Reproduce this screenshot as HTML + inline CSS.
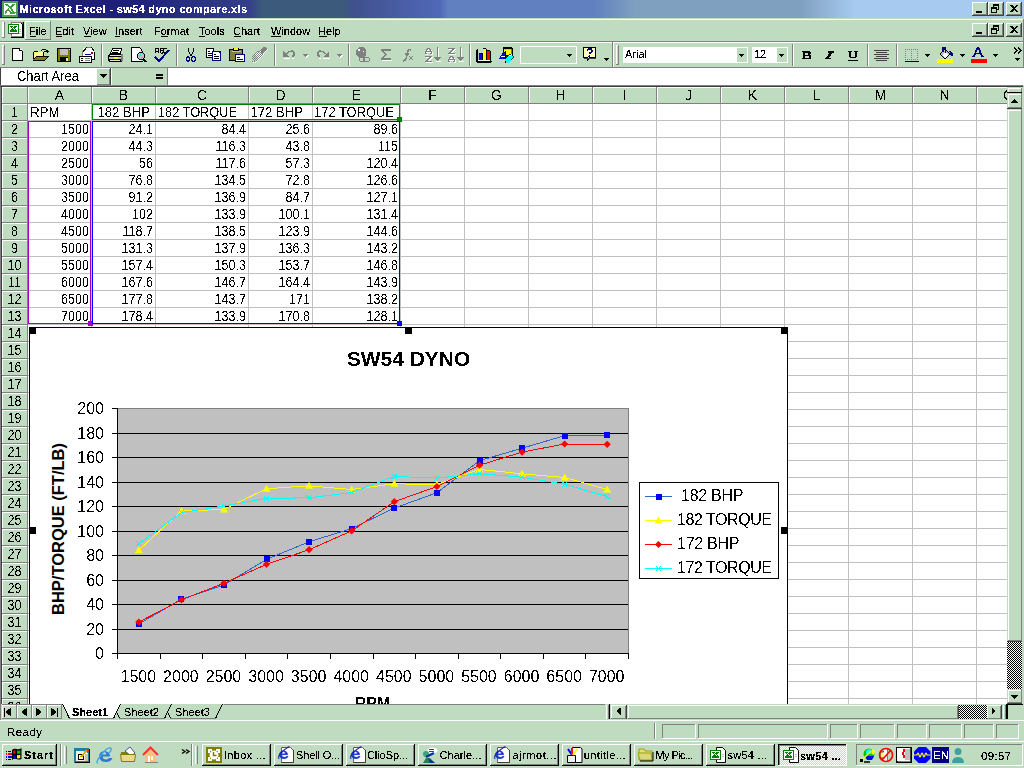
<!DOCTYPE html><html><head><meta charset="utf-8"><title>Microsoft Excel - sw54 dyno compare.xls</title><style>
*{margin:0;padding:0}html,body{width:1024px;height:768px;overflow:hidden;background:#c0dcc0}svg{display:block;font-family:"Liberation Sans",sans-serif}
</style></head><body>
<svg width="1024" height="768" viewBox="0 0 1024 768">
<defs>
<linearGradient id="tg" gradientUnits="userSpaceOnUse" x1="0" x2="1024" y1="0" y2="0"><stop offset="0.0000" stop-color="#1e1e7a"/><stop offset="0.1270" stop-color="#1e2078"/><stop offset="0.2441" stop-color="#34408a"/><stop offset="0.2559" stop-color="#3c5a7c"/><stop offset="0.3369" stop-color="#3c5a7c"/><stop offset="0.3438" stop-color="#40508c"/><stop offset="0.4297" stop-color="#5068b8"/><stop offset="0.4375" stop-color="#6080c0"/><stop offset="0.5801" stop-color="#6080c0"/><stop offset="0.6211" stop-color="#80a0c0"/><stop offset="0.7812" stop-color="#80a0c0"/><stop offset="0.8350" stop-color="#a6caf0"/><stop offset="1.0000" stop-color="#a6caf0"/></linearGradient>
<pattern id="dith" width="2" height="2" patternUnits="userSpaceOnUse"><rect width="2" height="2" fill="#fff"/><rect width="1" height="1" fill="#000"/><rect x="1" y="1" width="1" height="1" fill="#000"/></pattern>
<clipPath id="chartclip"><rect x="0" y="0" width="1007" height="704"/></clipPath><clipPath id="colclip"><rect x="977" y="87" width="30" height="17"/></clipPath><pattern id="dithw" width="2" height="2" patternUnits="userSpaceOnUse"><rect width="2" height="2" fill="#c0dcc0"/><rect width="1" height="1" fill="#fff"/><rect x="1" y="1" width="1" height="1" fill="#fff"/></pattern>
<filter id="crisp" x="-5%" y="-20%" width="110%" height="140%"><feComponentTransfer><feFuncA type="discrete" tableValues="0 1"/></feComponentTransfer></filter><filter id="crisp2" x="-5%" y="-20%" width="110%" height="140%"><feComponentTransfer><feFuncA type="discrete" tableValues="0 0 1 1 1"/></feComponentTransfer></filter>
</defs>
<g shape-rendering="crispEdges">
<rect x="0" y="0" width="1024" height="768" fill="#c0dcc0" />
<rect x="0" y="0" width="1024" height="18" fill="url(#tg)" />
</g>
<g shape-rendering="crispEdges">
<rect x="2" y="1" width="16" height="16" fill="#50a050" />
<rect x="4" y="3" width="12" height="12" fill="#fff" />
<path d="M5 4h3l2 2.5 2-2.5h3l-3.5 4 3.5 4.5v1h-5l-0-1-2-2.5-2 3.5h-1v-2l3-3.5z" fill="#40a040"/>
<path d="M7.5 6.5l5 6" stroke="#fff" stroke-width="1"/>
<rect x="12" y="12" width="4" height="1" fill="#40a040" />
<rect x="972" y="2" width="16" height="14" fill="#c0dcc0" />
<rect x="972" y="15" width="16" height="1" fill="#404040" />
<rect x="987" y="2" width="1" height="14" fill="#404040" />
<rect x="972" y="2" width="15" height="1" fill="#ffffff" />
<rect x="972" y="2" width="1" height="13" fill="#ffffff" />
<rect x="973" y="14" width="14" height="1" fill="#808080" />
<rect x="986" y="3" width="1" height="12" fill="#808080" />
<rect x="976" y="11" width="6" height="2" fill="#000" />
<rect x="988" y="2" width="16" height="14" fill="#c0dcc0" />
<rect x="988" y="15" width="16" height="1" fill="#404040" />
<rect x="1003" y="2" width="1" height="14" fill="#404040" />
<rect x="988" y="2" width="15" height="1" fill="#ffffff" />
<rect x="988" y="2" width="1" height="13" fill="#ffffff" />
<rect x="989" y="14" width="14" height="1" fill="#808080" />
<rect x="1002" y="3" width="1" height="12" fill="#808080" />
<path d="M993 4h6v6h-2v-1h1v-3h-4v1h-1z" fill="#000"/>
<path d="M991 7h6v6h-6z M992 9v3h4v-3z" fill="#000" fill-rule="evenodd"/>
<rect x="1006" y="2" width="16" height="14" fill="#c0dcc0" />
<rect x="1006" y="15" width="16" height="1" fill="#404040" />
<rect x="1021" y="2" width="1" height="14" fill="#404040" />
<rect x="1006" y="2" width="15" height="1" fill="#ffffff" />
<rect x="1006" y="2" width="1" height="13" fill="#ffffff" />
<rect x="1007" y="14" width="14" height="1" fill="#808080" />
<rect x="1020" y="3" width="1" height="12" fill="#808080" />
<path d="M1010 5h2l2 2 2-2h2l-3 3.5 3 3.5h-2l-2-2-2 2h-2l3-3.5z" fill="#000"/>
</g>
<text x="19.5" y="13" font-size="11" text-anchor="start" font-weight="bold" fill="#fff"  textLength="227.5" lengthAdjust="spacing" filter="url(#crisp2)">Microsoft Excel - sw54 dyno compare.xls</text>
<g shape-rendering="crispEdges">
<rect x="0" y="19" width="1023" height="1" fill="#ffffff" />
<rect x="0" y="41" width="1023" height="1" fill="#808080" />
<rect x="1023" y="19" width="1" height="23" fill="#808080" />
<rect x="2" y="22" width="1" height="16" fill="#ffffff" />
<rect x="3" y="22" width="1" height="16" fill="#ffffff" />
<rect x="4" y="22" width="1" height="16" fill="#808080" />
<rect x="2" y="37" width="3" height="1" fill="#808080" />
<rect x="11" y="22" width="13" height="16" fill="#000" />
<rect x="11" y="22" width="12" height="15" fill="#808080" />
<rect x="12" y="23" width="10" height="13" fill="#fff" />
<rect x="22" y="24" width="1" height="13" fill="#000" />
<rect x="12" y="37" width="12" height="1" fill="#000" />
<rect x="21" y="23" width="1" height="1" fill="#000" />
<rect x="20" y="24" width="1" height="1" fill="#fff" />
<rect x="19" y="29" width="2" height="1" fill="#c0c0c0" />
<rect x="19" y="31" width="2" height="1" fill="#c0c0c0" />
<rect x="19" y="33" width="2" height="1" fill="#c0c0c0" />
<rect x="8" y="24" width="11" height="10" fill="#fff" />
<rect x="8" y="24" width="11" height="1" fill="#008000" />
<rect x="8" y="25" width="1" height="1" fill="#008000" />
<rect x="18" y="25" width="1" height="1" fill="#008000" />
<rect x="8" y="26" width="1" height="1" fill="#008000" />
<rect x="10" y="26" width="3" height="1" fill="#008000" />
<rect x="14" y="26" width="3" height="1" fill="#008000" />
<rect x="18" y="26" width="1" height="1" fill="#008000" />
<rect x="8" y="27" width="1" height="1" fill="#008000" />
<rect x="11" y="27" width="1" height="1" fill="#008000" />
<rect x="13" y="27" width="3" height="1" fill="#008000" />
<rect x="18" y="27" width="1" height="1" fill="#008000" />
<rect x="8" y="28" width="1" height="1" fill="#008000" />
<rect x="12" y="28" width="1" height="1" fill="#008000" />
<rect x="14" y="28" width="1" height="1" fill="#008000" />
<rect x="18" y="28" width="1" height="1" fill="#008000" />
<rect x="8" y="29" width="1" height="1" fill="#008000" />
<rect x="11" y="29" width="3" height="1" fill="#008000" />
<rect x="15" y="29" width="1" height="1" fill="#008000" />
<rect x="18" y="29" width="1" height="1" fill="#008000" />
<rect x="8" y="30" width="1" height="1" fill="#008000" />
<rect x="10" y="30" width="7" height="1" fill="#008000" />
<rect x="18" y="30" width="1" height="1" fill="#008000" />
<rect x="8" y="31" width="1" height="1" fill="#008000" />
<rect x="10" y="31" width="7" height="1" fill="#008000" />
<rect x="18" y="31" width="1" height="1" fill="#008000" />
<rect x="8" y="32" width="1" height="1" fill="#008000" />
<rect x="18" y="32" width="1" height="1" fill="#008000" />
<rect x="8" y="33" width="11" height="1" fill="#008000" />
<rect x="25" y="21" width="26" height="1" fill="#ffffff" />
<rect x="25" y="21" width="1" height="19" fill="#ffffff" />
<rect x="25" y="39" width="26" height="1" fill="#808080" />
<rect x="50" y="21" width="1" height="19" fill="#808080" />
<rect x="972" y="23" width="16" height="14" fill="#c0dcc0" />
<rect x="972" y="36" width="16" height="1" fill="#404040" />
<rect x="987" y="23" width="1" height="14" fill="#404040" />
<rect x="972" y="23" width="15" height="1" fill="#ffffff" />
<rect x="972" y="23" width="1" height="13" fill="#ffffff" />
<rect x="973" y="35" width="14" height="1" fill="#808080" />
<rect x="986" y="24" width="1" height="12" fill="#808080" />
<rect x="976" y="32" width="6" height="2" fill="#000" />
<rect x="988" y="23" width="16" height="14" fill="#c0dcc0" />
<rect x="988" y="36" width="16" height="1" fill="#404040" />
<rect x="1003" y="23" width="1" height="14" fill="#404040" />
<rect x="988" y="23" width="15" height="1" fill="#ffffff" />
<rect x="988" y="23" width="1" height="13" fill="#ffffff" />
<rect x="989" y="35" width="14" height="1" fill="#808080" />
<rect x="1002" y="24" width="1" height="12" fill="#808080" />
<path d="M993 25h6v6h-2v-1h1v-3h-4v1h-1z" fill="#000"/>
<path d="M991 28h6v6h-6z M992 30v3h4v-3z" fill="#000" fill-rule="evenodd"/>
<rect x="1006" y="23" width="16" height="14" fill="#c0dcc0" />
<rect x="1006" y="36" width="16" height="1" fill="#404040" />
<rect x="1021" y="23" width="1" height="14" fill="#404040" />
<rect x="1006" y="23" width="15" height="1" fill="#ffffff" />
<rect x="1006" y="23" width="1" height="13" fill="#ffffff" />
<rect x="1007" y="35" width="14" height="1" fill="#808080" />
<rect x="1020" y="24" width="1" height="12" fill="#808080" />
<path d="M1010 26h2l2 2 2-2h2l-3 3.5 3 3.5h-2l-2-2-2 2h-2l3-3.5z" fill="#000"/>
</g>
<text x="29" y="35" font-size="11" text-anchor="start" font-weight="normal" fill="#000"  filter="url(#crisp2)">File</text>
<text x="55" y="35" font-size="11" text-anchor="start" font-weight="normal" fill="#000"  filter="url(#crisp2)">Edit</text>
<text x="83" y="35" font-size="11" text-anchor="start" font-weight="normal" fill="#000"  filter="url(#crisp2)">View</text>
<text x="115" y="35" font-size="11" text-anchor="start" font-weight="normal" fill="#000"  filter="url(#crisp2)">Insert</text>
<text x="154" y="35" font-size="11" text-anchor="start" font-weight="normal" fill="#000"  filter="url(#crisp2)">Format</text>
<text x="199" y="35" font-size="11" text-anchor="start" font-weight="normal" fill="#000"  filter="url(#crisp2)">Tools</text>
<text x="233" y="35" font-size="11" text-anchor="start" font-weight="normal" fill="#000"  filter="url(#crisp2)">Chart</text>
<text x="271" y="35" font-size="11" text-anchor="start" font-weight="normal" fill="#000"  filter="url(#crisp2)">Window</text>
<text x="318" y="35" font-size="11" text-anchor="start" font-weight="normal" fill="#000"  filter="url(#crisp2)">Help</text>
<g shape-rendering="crispEdges">
<rect x="30" y="36" width="6" height="1" fill="#000" />
<rect x="56" y="36" width="6" height="1" fill="#000" />
<rect x="84" y="36" width="7" height="1" fill="#000" />
<rect x="115" y="36" width="5" height="1" fill="#000" />
<rect x="161" y="36" width="7" height="1" fill="#000" />
<rect x="199" y="36" width="6" height="1" fill="#000" />
<rect x="234" y="36" width="7" height="1" fill="#000" />
<rect x="271" y="36" width="10" height="1" fill="#000" />
<rect x="319" y="36" width="8" height="1" fill="#000" />
</g>
<g shape-rendering="crispEdges">
<rect x="0" y="42" width="1023" height="1" fill="#ffffff" />
<rect x="0" y="67" width="1024" height="1" fill="#808080" />
<rect x="1023" y="42" width="1" height="26" fill="#808080" />
<rect x="612" y="42" width="1" height="26" fill="#808080" />
<rect x="613" y="43" width="1" height="24" fill="#ffffff" />
<rect x="2" y="45" width="1" height="20" fill="#ffffff" />
<rect x="2" y="45" width="3" height="1" fill="#ffffff" />
<rect x="4" y="45" width="1" height="20" fill="#808080" />
<rect x="2" y="64" width="3" height="1" fill="#808080" />
<rect x="101" y="44" width="1" height="22" fill="#808080" />
<rect x="102" y="44" width="1" height="22" fill="#ffffff" />
<rect x="176" y="44" width="1" height="22" fill="#808080" />
<rect x="177" y="44" width="1" height="22" fill="#ffffff" />
<rect x="274" y="44" width="1" height="22" fill="#808080" />
<rect x="275" y="44" width="1" height="22" fill="#ffffff" />
<rect x="348" y="44" width="1" height="22" fill="#808080" />
<rect x="349" y="44" width="1" height="22" fill="#ffffff" />
<rect x="469" y="44" width="1" height="22" fill="#808080" />
<rect x="470" y="44" width="1" height="22" fill="#ffffff" />
<rect x="616" y="45" width="1" height="20" fill="#ffffff" />
<rect x="616" y="45" width="3" height="1" fill="#ffffff" />
<rect x="618" y="45" width="1" height="20" fill="#808080" />
<rect x="616" y="64" width="3" height="1" fill="#808080" />
<rect x="792" y="44" width="1" height="22" fill="#808080" />
<rect x="793" y="44" width="1" height="22" fill="#ffffff" />
<rect x="867" y="44" width="1" height="22" fill="#808080" />
<rect x="868" y="44" width="1" height="22" fill="#ffffff" />
<rect x="896" y="44" width="1" height="22" fill="#808080" />
<rect x="897" y="44" width="1" height="22" fill="#ffffff" />
<rect x="13" y="49" width="9" height="11" fill="#fff" />
<rect x="12" y="48" width="8" height="1" fill="#000" />
<rect x="12" y="48" width="1" height="13" fill="#000" />
<rect x="12" y="60" width="11" height="1" fill="#000" />
<rect x="22" y="51" width="1" height="10" fill="#000" />
<rect x="20" y="49" width="1" height="1" fill="#000" />
<rect x="21" y="50" width="1" height="1" fill="#000" />
<rect x="19" y="49" width="1" height="2" fill="#000" />
<rect x="19" y="50" width="3" height="1" fill="#000" />
<rect x="20" y="49" width="1" height="1" fill="#fff" />
<rect x="34" y="51" width="4" height="1" fill="#000" />
<rect x="33" y="52" width="1" height="9" fill="#000" />
<rect x="37" y="52" width="7" height="1" fill="#000" />
<rect x="43" y="52" width="1" height="4" fill="#000" />
<rect x="34" y="52" width="9" height="4" fill="#ffff80" />
<rect x="34" y="56" width="2" height="3" fill="#ffff80" />
<path d="M36 56h13l-4 4h-12z" fill="#808000"/>
<rect x="36" y="56" width="13" height="1" fill="#000" />
<rect x="33" y="60" width="12" height="1" fill="#000" />
<path d="M48.5 56.5l-4 4" stroke="#000"/>
<path d="M36.5 56.5l-3 3" stroke="#000"/>
<rect x="42" y="49" width="4" height="1" fill="#000" />
<rect x="41" y="50" width="1" height="1" fill="#000" />
<rect x="46" y="50" width="1" height="1" fill="#000" />
<rect x="44" y="51" width="5" height="1" fill="#000" />
<rect x="47" y="52" width="1" height="1" fill="#000" />
<rect x="47" y="50" width="1" height="2" fill="#000" />
<rect x="57" y="48" width="14" height="14" fill="#000" />
<rect x="58" y="49" width="12" height="12" fill="#808000" />
<rect x="60" y="49" width="8" height="6" fill="#c0c0c0" />
<rect x="60" y="57" width="8" height="5" fill="#000" />
<rect x="66" y="58" width="2" height="3" fill="#e0e0e0" />
<rect x="69" y="49" width="1" height="1" fill="#fff" />
<rect x="83" y="48" width="11" height="11" fill="#fff" />
<rect x="86" y="47" width="6" height="1" fill="#808080" />
<path d="M82.5 52.5l4-5M91.5 47.5l3 4" stroke="#000"/>
<rect x="94" y="52" width="1" height="8" fill="#000" />
<rect x="87" y="59" width="8" height="1" fill="#000" />
<rect x="82" y="51" width="1" height="6" fill="#808080" />
<rect x="85" y="54" width="6" height="1" fill="#0000a0" />
<rect x="91" y="52" width="2" height="2" fill="#a00000" />
<rect x="79" y="56" width="13" height="7" fill="#000" />
<rect x="80" y="57" width="11" height="5" fill="#fff" />
<rect x="81" y="58" width="2" height="1" fill="#000" />
<rect x="81" y="60" width="2" height="1" fill="#000" />
<rect x="85" y="58" width="5" height="1" fill="#808080" />
<rect x="85" y="60" width="5" height="1" fill="#808080" />
<path d="M112.5 48.5h9l-1 5h-10z" fill="#fff" stroke="#000"/>
<rect x="113" y="50" width="6" height="1" fill="#000" />
<rect x="112" y="52" width="6" height="1" fill="#000" />
<rect x="109" y="54" width="13" height="8" fill="#000" />
<rect x="108" y="55" width="15" height="6" fill="#000" />
<rect x="110" y="55" width="11" height="1" fill="#e0e0e0" />
<rect x="109" y="57" width="12" height="1" fill="#c0c0c0" />
<rect x="109" y="58" width="12" height="1" fill="#c0c0c0" />
<rect x="114" y="57" width="4" height="1" fill="#ffff00" />
<rect x="114" y="58" width="4" height="1" fill="#ffff00" />
<rect x="110" y="60" width="10" height="1" fill="#e0e0e0" />
<rect x="121" y="54" width="2" height="7" fill="#808080" />
<rect x="132" y="48" width="9" height="13" fill="#fff" />
<rect x="131" y="47" width="9" height="1" fill="#000" />
<rect x="131" y="47" width="1" height="15" fill="#000" />
<rect x="131" y="61" width="12" height="1" fill="#000" />
<rect x="142" y="51" width="1" height="3" fill="#000" />
<rect x="140" y="48" width="1" height="1" fill="#000" />
<rect x="141" y="49" width="1" height="2" fill="#000" />
<rect x="139" y="49" width="1" height="1" fill="#fff" />
<circle cx="141" cy="56" r="3.6" fill="#c0c0c0" stroke="#000" stroke-width="1.2"/>
<rect x="139" y="54" width="2" height="2" fill="#00ffff" />
<rect x="141" y="57" width="2" height="1" fill="#00ffff" />
<path d="M143.5 59.5l3 2.5" stroke="#000" stroke-width="2"/>
<path d="M155.5 53v-4l1-1h1l1 1v4M155.5 51h3M160.5 53v-5h2l1 1v1l-1 .5 1 .5v1l-1 1h-2M160.5 50.5h2M167 49l-1-1h-1.5l-1 1v3l1 1h1.5l1-1" fill="none" stroke="#000"/>
<path d="M155 57l4 4 10-11" fill="none" stroke="#000080" stroke-width="2"/>
<path d="M188.5 48v3l2 4M193.5 48v3l-2 4" fill="none" stroke="#000"/>
<rect x="190" y="54" width="2" height="2" fill="#000" />
<ellipse cx="188" cy="59" rx="1.8" ry="2.2" fill="none" stroke="#000080" stroke-width="1.2"/><ellipse cx="193.5" cy="59" rx="1.8" ry="2.2" fill="none" stroke="#000080" stroke-width="1.2"/>
<rect x="206" y="48" width="8" height="10" fill="#000" />
<rect x="207" y="49" width="6" height="8" fill="#fff" />
<rect x="208" y="51" width="2" height="1" fill="#000" />
<rect x="208" y="53" width="4" height="1" fill="#000" />
<rect x="208" y="55" width="4" height="1" fill="#000" />
<rect x="212" y="51" width="9" height="10" fill="#000080" />
<rect x="213" y="52" width="7" height="8" fill="#fff" />
<rect x="214" y="54" width="2" height="1" fill="#000" />
<rect x="214" y="56" width="5" height="1" fill="#000" />
<rect x="214" y="58" width="5" height="1" fill="#000" />
<rect x="219" y="52" width="1" height="1" fill="#000080" />
<rect x="229" y="49" width="14" height="12" fill="#000" />
<rect x="230" y="50" width="12" height="10" fill="#808040" />
<rect x="233" y="48" width="6" height="3" fill="#000" />
<rect x="234" y="48" width="4" height="2" fill="#ffff00" />
<rect x="232" y="51" width="9" height="1" fill="#c0c0c0" />
<rect x="235" y="54" width="10" height="8" fill="#000080" />
<rect x="236" y="55" width="8" height="6" fill="#fff" />
<rect x="237" y="57" width="3" height="1" fill="#000080" />
<rect x="237" y="59" width="6" height="1" fill="#000080" />
<rect x="263" y="47" width="3" height="1" fill="#808080" />
<rect x="262" y="48" width="5" height="1" fill="#808080" />
<rect x="261" y="49" width="6" height="1" fill="#808080" />
<rect x="260" y="50" width="6" height="1" fill="#808080" />
<rect x="257" y="51" width="3" height="1" fill="#808080" />
<rect x="261" y="51" width="4" height="1" fill="#808080" />
<rect x="256" y="52" width="1" height="1" fill="#808080" />
<rect x="258" y="52" width="1" height="1" fill="#808080" />
<rect x="260" y="52" width="4" height="1" fill="#808080" />
<rect x="255" y="53" width="1" height="1" fill="#808080" />
<rect x="257" y="53" width="1" height="1" fill="#808080" />
<rect x="259" y="53" width="1" height="1" fill="#808080" />
<rect x="261" y="53" width="2" height="1" fill="#808080" />
<rect x="254" y="54" width="1" height="1" fill="#808080" />
<rect x="256" y="54" width="1" height="1" fill="#808080" />
<rect x="258" y="54" width="1" height="1" fill="#808080" />
<rect x="260" y="54" width="1" height="1" fill="#808080" />
<rect x="262" y="54" width="1" height="1" fill="#808080" />
<rect x="253" y="55" width="1" height="1" fill="#808080" />
<rect x="255" y="55" width="1" height="1" fill="#808080" />
<rect x="257" y="55" width="1" height="1" fill="#808080" />
<rect x="259" y="55" width="1" height="1" fill="#808080" />
<rect x="261" y="55" width="1" height="1" fill="#808080" />
<rect x="252" y="56" width="1" height="1" fill="#808080" />
<rect x="254" y="56" width="1" height="1" fill="#808080" />
<rect x="256" y="56" width="1" height="1" fill="#808080" />
<rect x="258" y="56" width="1" height="1" fill="#808080" />
<rect x="260" y="56" width="1" height="1" fill="#808080" />
<rect x="253" y="57" width="1" height="1" fill="#808080" />
<rect x="255" y="57" width="1" height="1" fill="#808080" />
<rect x="257" y="57" width="1" height="1" fill="#808080" />
<rect x="259" y="57" width="1" height="1" fill="#808080" />
<rect x="252" y="58" width="1" height="1" fill="#808080" />
<rect x="254" y="58" width="1" height="1" fill="#808080" />
<rect x="256" y="58" width="1" height="1" fill="#808080" />
<rect x="258" y="58" width="1" height="1" fill="#808080" />
<rect x="253" y="59" width="1" height="1" fill="#808080" />
<rect x="255" y="59" width="1" height="1" fill="#808080" />
<rect x="257" y="59" width="1" height="1" fill="#808080" />
<rect x="254" y="60" width="1" height="1" fill="#808080" />
<rect x="256" y="60" width="1" height="1" fill="#808080" />
<rect x="252" y="61" width="1" height="1" fill="#808080" />
<rect x="254" y="61" width="1" height="1" fill="#808080" />
<rect x="267" y="49" width="1" height="1" fill="#ffffff" />
<rect x="266" y="50" width="1" height="1" fill="#ffffff" />
<rect x="260" y="51" width="1" height="1" fill="#ffffff" />
<rect x="265" y="51" width="1" height="1" fill="#ffffff" />
<rect x="257" y="52" width="1" height="1" fill="#ffffff" />
<rect x="259" y="52" width="1" height="1" fill="#ffffff" />
<rect x="264" y="52" width="1" height="1" fill="#ffffff" />
<rect x="256" y="53" width="1" height="1" fill="#ffffff" />
<rect x="258" y="53" width="1" height="1" fill="#ffffff" />
<rect x="260" y="53" width="1" height="1" fill="#ffffff" />
<rect x="263" y="53" width="1" height="1" fill="#ffffff" />
<rect x="255" y="54" width="1" height="1" fill="#ffffff" />
<rect x="257" y="54" width="1" height="1" fill="#ffffff" />
<rect x="259" y="54" width="1" height="1" fill="#ffffff" />
<rect x="261" y="54" width="1" height="1" fill="#ffffff" />
<rect x="263" y="54" width="1" height="1" fill="#ffffff" />
<rect x="256" y="55" width="1" height="1" fill="#ffffff" />
<rect x="258" y="55" width="1" height="1" fill="#ffffff" />
<rect x="260" y="55" width="1" height="1" fill="#ffffff" />
<rect x="262" y="55" width="1" height="1" fill="#ffffff" />
<rect x="257" y="56" width="1" height="1" fill="#ffffff" />
<rect x="259" y="56" width="1" height="1" fill="#ffffff" />
<rect x="261" y="56" width="1" height="1" fill="#ffffff" />
<rect x="258" y="57" width="1" height="1" fill="#ffffff" />
<rect x="260" y="57" width="1" height="1" fill="#ffffff" />
<rect x="259" y="58" width="1" height="1" fill="#ffffff" />
<rect x="258" y="59" width="1" height="1" fill="#ffffff" />
<rect x="257" y="60" width="1" height="1" fill="#ffffff" />
<rect x="256" y="61" width="1" height="1" fill="#ffffff" />
<rect x="253" y="62" width="1" height="1" fill="#ffffff" />
<rect x="255" y="62" width="1" height="1" fill="#ffffff" />
<path d="M283 51v6h6z" fill="#808080"/>
<path d="M286 54q3-3 6-3q3 1 2 4l-2 2" fill="none" stroke="#808080" stroke-width="1.5"/>
<rect x="284" y="58" width="6" height="1" fill="#ffffff" />
<rect x="292" y="58" width="2" height="1" fill="#ffffff" />
<rect x="304" y="55" width="5" height="1" fill="#ffffff" />
<rect x="305" y="56" width="3" height="1" fill="#ffffff" />
<rect x="306" y="57" width="1" height="1" fill="#ffffff" />
<rect x="303" y="54" width="5" height="1" fill="#808080" />
<rect x="304" y="55" width="3" height="1" fill="#808080" />
<rect x="305" y="56" width="1" height="1" fill="#808080" />
<path d="M329 51v6h-6z" fill="#808080"/>
<path d="M326 54q-3-3-6-3q-3 1-2 4l2 2" fill="none" stroke="#808080" stroke-width="1.5"/>
<rect x="323" y="58" width="7" height="1" fill="#ffffff" />
<rect x="319" y="58" width="2" height="1" fill="#ffffff" />
<rect x="338" y="55" width="5" height="1" fill="#ffffff" />
<rect x="339" y="56" width="3" height="1" fill="#ffffff" />
<rect x="340" y="57" width="1" height="1" fill="#ffffff" />
<rect x="337" y="54" width="5" height="1" fill="#808080" />
<rect x="338" y="55" width="3" height="1" fill="#808080" />
<rect x="339" y="56" width="1" height="1" fill="#808080" />
<path d="M356 50l3-3h4l3 3v5l-3 3h-4l-3-3z" fill="#808080"/>
<rect x="358" y="49" width="2" height="2" fill="#ffffff" />
<rect x="363" y="51" width="1" height="1" fill="#ffffff" />
<rect x="359.5" y="57.5" width="5" height="4" rx="2" fill="none" stroke="#808080"/><rect x="363.5" y="57.5" width="6" height="4" rx="2" fill="none" stroke="#808080"/>
<path d="M390 51v-1h-8l4 4.5-4 4.5h8v-1" fill="none" stroke="#808080" stroke-width="1.5"/>
<rect x="382" y="60" width="10" height="1" fill="#ffffff" />
<path d="M403 61q3 0 4-6l1-4q1-2 3-1M405 54h4" fill="none" stroke="#808080" stroke-width="1.5"/>
<path d="M409 56l4 4M413 56l-4 4" stroke="#808080" stroke-width="1.2"/>
<rect x="428" y="49" width="3" height="1" fill="#ffffff" />
<rect x="427" y="50" width="2" height="1" fill="#ffffff" />
<rect x="430" y="50" width="2" height="1" fill="#ffffff" />
<rect x="427" y="51" width="1" height="1" fill="#ffffff" />
<rect x="431" y="51" width="1" height="1" fill="#ffffff" />
<rect x="426" y="52" width="7" height="1" fill="#ffffff" />
<rect x="426" y="53" width="1" height="1" fill="#ffffff" />
<rect x="432" y="53" width="1" height="1" fill="#ffffff" />
<rect x="426" y="54" width="2" height="1" fill="#ffffff" />
<rect x="431" y="54" width="2" height="1" fill="#ffffff" />
<rect x="427" y="48" width="3" height="1" fill="#808080" />
<rect x="426" y="49" width="2" height="1" fill="#808080" />
<rect x="429" y="49" width="2" height="1" fill="#808080" />
<rect x="426" y="50" width="1" height="1" fill="#808080" />
<rect x="430" y="50" width="1" height="1" fill="#808080" />
<rect x="425" y="51" width="7" height="1" fill="#808080" />
<rect x="425" y="52" width="1" height="1" fill="#808080" />
<rect x="431" y="52" width="1" height="1" fill="#808080" />
<rect x="425" y="53" width="2" height="1" fill="#808080" />
<rect x="430" y="53" width="2" height="1" fill="#808080" />
<rect x="426" y="57" width="7" height="1" fill="#ffffff" />
<rect x="430" y="58" width="2" height="1" fill="#ffffff" />
<rect x="429" y="59" width="2" height="1" fill="#ffffff" />
<rect x="428" y="60" width="2" height="1" fill="#ffffff" />
<rect x="427" y="61" width="2" height="1" fill="#ffffff" />
<rect x="426" y="62" width="7" height="1" fill="#ffffff" />
<rect x="425" y="56" width="7" height="1" fill="#808080" />
<rect x="429" y="57" width="2" height="1" fill="#808080" />
<rect x="428" y="58" width="2" height="1" fill="#808080" />
<rect x="427" y="59" width="2" height="1" fill="#808080" />
<rect x="426" y="60" width="2" height="1" fill="#808080" />
<rect x="425" y="61" width="7" height="1" fill="#808080" />
<rect x="438" y="48" width="1" height="11" fill="#ffffff" />
<rect x="437" y="47" width="1" height="12" fill="#808080" />
<rect x="434" y="57" width="7" height="1" fill="#808080" />
<rect x="435" y="58" width="5" height="1" fill="#808080" />
<rect x="436" y="59" width="3" height="1" fill="#808080" />
<rect x="437" y="60" width="1" height="1" fill="#808080" />
<rect x="436" y="61" width="5" height="1" fill="#ffffff" />
<rect x="449" y="49" width="7" height="1" fill="#ffffff" />
<rect x="453" y="50" width="2" height="1" fill="#ffffff" />
<rect x="452" y="51" width="2" height="1" fill="#ffffff" />
<rect x="451" y="52" width="2" height="1" fill="#ffffff" />
<rect x="450" y="53" width="2" height="1" fill="#ffffff" />
<rect x="449" y="54" width="7" height="1" fill="#ffffff" />
<rect x="448" y="48" width="7" height="1" fill="#808080" />
<rect x="452" y="49" width="2" height="1" fill="#808080" />
<rect x="451" y="50" width="2" height="1" fill="#808080" />
<rect x="450" y="51" width="2" height="1" fill="#808080" />
<rect x="449" y="52" width="2" height="1" fill="#808080" />
<rect x="448" y="53" width="7" height="1" fill="#808080" />
<rect x="451" y="57" width="3" height="1" fill="#ffffff" />
<rect x="450" y="58" width="2" height="1" fill="#ffffff" />
<rect x="453" y="58" width="2" height="1" fill="#ffffff" />
<rect x="450" y="59" width="1" height="1" fill="#ffffff" />
<rect x="454" y="59" width="1" height="1" fill="#ffffff" />
<rect x="449" y="60" width="7" height="1" fill="#ffffff" />
<rect x="449" y="61" width="1" height="1" fill="#ffffff" />
<rect x="455" y="61" width="1" height="1" fill="#ffffff" />
<rect x="449" y="62" width="2" height="1" fill="#ffffff" />
<rect x="454" y="62" width="2" height="1" fill="#ffffff" />
<rect x="450" y="56" width="3" height="1" fill="#808080" />
<rect x="449" y="57" width="2" height="1" fill="#808080" />
<rect x="452" y="57" width="2" height="1" fill="#808080" />
<rect x="449" y="58" width="1" height="1" fill="#808080" />
<rect x="453" y="58" width="1" height="1" fill="#808080" />
<rect x="448" y="59" width="7" height="1" fill="#808080" />
<rect x="448" y="60" width="1" height="1" fill="#808080" />
<rect x="454" y="60" width="1" height="1" fill="#808080" />
<rect x="448" y="61" width="2" height="1" fill="#808080" />
<rect x="453" y="61" width="2" height="1" fill="#808080" />
<rect x="461" y="48" width="1" height="11" fill="#ffffff" />
<rect x="460" y="47" width="1" height="12" fill="#808080" />
<rect x="457" y="57" width="7" height="1" fill="#808080" />
<rect x="458" y="58" width="5" height="1" fill="#808080" />
<rect x="459" y="59" width="3" height="1" fill="#808080" />
<rect x="460" y="60" width="1" height="1" fill="#808080" />
<rect x="459" y="61" width="5" height="1" fill="#ffffff" />
<rect x="477" y="49" width="1" height="13" fill="#000" />
<rect x="477" y="61" width="15" height="1" fill="#000" />
<rect x="476" y="50" width="2" height="12" fill="#000" />
<rect x="477" y="62" width="14" height="1" fill="#000" />
<rect x="478" y="52" width="1" height="8" fill="#c0c0c0" />
<rect x="478" y="60" width="13" height="1" fill="#fff" />
<rect x="479" y="54" width="3" height="6" fill="#0000ff" />
<rect x="479" y="53" width="3" height="1" fill="#000" />
<rect x="482" y="53" width="1" height="7" fill="#000" />
<rect x="483" y="49" width="3" height="11" fill="#ffff00" />
<rect x="483" y="48" width="3" height="1" fill="#000" />
<rect x="486" y="49" width="1" height="11" fill="#000" />
<rect x="487" y="51" width="3" height="9" fill="#ff0000" />
<rect x="487" y="50" width="3" height="1" fill="#000" />
<rect x="490" y="51" width="1" height="10" fill="#000" />
<rect x="503" y="48" width="10" height="8" fill="#000" />
<rect x="504" y="49" width="8" height="6" fill="#ffff00" />
<rect x="504" y="49" width="8" height="1" fill="#c0c0c0" />
<rect x="511" y="49" width="1" height="6" fill="#808000" />
<rect x="503" y="47" width="9" height="1" fill="#000" />
<path d="M499.5 58.5l4-6h2v6" fill="#0000ff" stroke="#000080"/>
<rect x="501" y="56" width="4" height="1" fill="#fff" />
<rect x="505" y="51" width="1" height="12" fill="#000" />
<path d="M506 57l5-3 3 3-5 4z" fill="#00ffff" stroke="#000" stroke-width=".8"/>
<circle cx="508" cy="60" r="2.6" fill="#00ffff"/>
<path d="M509 56l3-1.5" stroke="#fff" stroke-width="1.2"/>
<rect x="520" y="46" width="57" height="1" fill="#ffffff" />
<rect x="520" y="63" width="57" height="1" fill="#ffffff" />
<rect x="520" y="46" width="1" height="18" fill="#ffffff" />
<rect x="576" y="46" width="1" height="18" fill="#ffffff" />
<rect x="567" y="54" width="5" height="1" fill="#000" />
<rect x="568" y="55" width="3" height="1" fill="#000" />
<rect x="569" y="56" width="1" height="1" fill="#000" />
<path d="M583.5 47.5h12v10h-6l-2 3v-3h-4z" fill="#ffffc0" stroke="#000"/>
<rect x="584" y="58" width="12" height="1" fill="#404040" />
<text x="586" y="57" font-size="12" text-anchor="start" font-weight="bold" fill="#000080"  filter="url(#crisp2)">?</text>
<rect x="604" y="58" width="5" height="1" fill="#000" />
<rect x="605" y="59" width="3" height="1" fill="#000" />
<rect x="606" y="60" width="1" height="1" fill="#000" />
<rect x="623" y="47" width="125" height="16" fill="#fff" />
<rect x="737" y="48" width="10" height="14" fill="#c0dcc0" />
<rect x="739" y="54" width="5" height="1" fill="#000" />
<rect x="740" y="55" width="3" height="1" fill="#000" />
<rect x="741" y="56" width="1" height="1" fill="#000" />
<text x="625" y="58" font-size="11" text-anchor="start" font-weight="normal" fill="#000"  filter="url(#crisp2)">Arial</text>
<rect x="752" y="47" width="36" height="16" fill="#fff" />
<rect x="777" y="48" width="10" height="14" fill="#c0dcc0" />
<rect x="779" y="54" width="5" height="1" fill="#000" />
<rect x="780" y="55" width="3" height="1" fill="#000" />
<rect x="781" y="56" width="1" height="1" fill="#000" />
<text x="754" y="58" font-size="11" text-anchor="start" font-weight="normal" fill="#000"  filter="url(#crisp2)">12</text>
<path d="M802 51h6q3 0 3 2t-2 1.5q2.5.5 2.5 2.5t-3 2h-6.5v-1h1v-6h-1z M805 52.5v2h2.5q1 0 1-1t-1-1z M805 55.5v2.5h3q1 0 1-1.2t-1-1.3z" fill="#000" fill-rule="evenodd"/>
<path d="M828 51h6v1.5h-1.5l-3 5h1.5v1.5h-6v-1.5h1.5l3-5h-1.5z" fill="#000"/>
<path d="M848 51h4v1h-1v4q0 1.5 2 1.5t2-1.5v-4h-1v-1h4v1h-1v4q0 2.5-4 2.5t-4-2.5v-4h-1z" fill="#000"/>
<rect x="848" y="60" width="10" height="1" fill="#000" />
<rect x="874" y="50" width="15" height="1" fill="#404040" />
<rect x="876" y="52" width="11" height="1" fill="#404040" />
<rect x="874" y="54" width="15" height="1" fill="#404040" />
<rect x="876" y="56" width="11" height="1" fill="#404040" />
<rect x="874" y="58" width="15" height="1" fill="#404040" />
<rect x="876" y="60" width="11" height="1" fill="#404040" />
<rect x="905" y="49" width="1" height="1" fill="#808080" />
<rect x="907" y="49" width="1" height="1" fill="#808080" />
<rect x="909" y="49" width="1" height="1" fill="#808080" />
<rect x="911" y="49" width="1" height="1" fill="#808080" />
<rect x="913" y="49" width="1" height="1" fill="#808080" />
<rect x="915" y="49" width="1" height="1" fill="#808080" />
<rect x="917" y="49" width="1" height="1" fill="#808080" />
<rect x="905" y="51" width="1" height="1" fill="#808080" />
<rect x="911" y="51" width="1" height="1" fill="#808080" />
<rect x="917" y="51" width="1" height="1" fill="#808080" />
<rect x="905" y="53" width="1" height="1" fill="#808080" />
<rect x="911" y="53" width="1" height="1" fill="#808080" />
<rect x="917" y="53" width="1" height="1" fill="#808080" />
<rect x="905" y="55" width="1" height="1" fill="#808080" />
<rect x="911" y="55" width="1" height="1" fill="#808080" />
<rect x="917" y="55" width="1" height="1" fill="#808080" />
<rect x="905" y="57" width="1" height="1" fill="#808080" />
<rect x="911" y="57" width="1" height="1" fill="#808080" />
<rect x="917" y="57" width="1" height="1" fill="#808080" />
<rect x="905" y="59" width="1" height="1" fill="#808080" />
<rect x="907" y="59" width="1" height="1" fill="#808080" />
<rect x="909" y="59" width="1" height="1" fill="#808080" />
<rect x="911" y="59" width="1" height="1" fill="#808080" />
<rect x="913" y="59" width="1" height="1" fill="#808080" />
<rect x="915" y="59" width="1" height="1" fill="#808080" />
<rect x="917" y="59" width="1" height="1" fill="#808080" />
<rect x="905" y="61" width="14" height="1" fill="#000" />
<rect x="925" y="54" width="5" height="1" fill="#000" />
<rect x="926" y="55" width="3" height="1" fill="#000" />
<rect x="927" y="56" width="1" height="1" fill="#000" />
<path d="M940 54l5-5 5 5-5 5z" fill="#c0c0c0" stroke="#000"/>
<path d="M942 55l3-3 3 3-3 3z" fill="#fff"/>
<path d="M943 52v-4h2.5v5" fill="none" stroke="#000080" stroke-width="1.2"/>
<path d="M949 51h2l1.5 2v3h-1.5z" fill="#000080"/>
<rect x="937" y="59" width="16" height="4" fill="#ffff00" />
<rect x="960" y="54" width="5" height="1" fill="#000" />
<rect x="961" y="55" width="3" height="1" fill="#000" />
<rect x="962" y="56" width="1" height="1" fill="#000" />
<path d="M971 57h4v-1l1-2h4l1 2v1h3v-1h-1l-4-9h-2l-4 9h-1z M976.5 52.5h3l-1.5-3.5z" fill="#000080" fill-rule="evenodd"/>
<rect x="971" y="59" width="16" height="4" fill="#ff0000" />
<rect x="993" y="54" width="5" height="1" fill="#000" />
<rect x="994" y="55" width="3" height="1" fill="#000" />
<rect x="995" y="56" width="1" height="1" fill="#000" />
<path d="M1014 48l3 2.5-3 2.5M1018 48l3 2.5-3 2.5" fill="none" stroke="#000" stroke-width="1.5"/>
<rect x="1015" y="58" width="5" height="1" fill="#000" />
<rect x="1016" y="59" width="3" height="1" fill="#000" />
<rect x="1017" y="60" width="1" height="1" fill="#000" />
</g>
<g shape-rendering="crispEdges">
<rect x="0" y="68" width="1" height="17" fill="#404040" />
<rect x="1" y="68" width="95" height="17" fill="#fff" />
<rect x="96" y="68" width="15" height="17" fill="#c0dcc0" />
<rect x="96" y="68" width="14" height="1" fill="#ffffff" />
<rect x="96" y="68" width="1" height="17" fill="#ffffff" />
<rect x="96" y="85" width="15" height="1" fill="#404040" />
<rect x="110" y="68" width="1" height="18" fill="#404040" />
<rect x="97" y="84" width="13" height="1" fill="#808080" />
<rect x="109" y="69" width="1" height="16" fill="#808080" />
<path d="M100 74h7l-3.5 4z" fill="#000"/>
<rect x="111" y="68" width="1" height="17" fill="#ffffff" />
<rect x="156" y="74" width="7" height="2" fill="#000" />
<rect x="156" y="77" width="7" height="2" fill="#000" />
<rect x="167" y="68" width="1" height="17" fill="#808080" />
<rect x="168" y="68" width="856" height="17" fill="#fff" />
<rect x="0" y="85" width="1023" height="1" fill="#808080" />
<rect x="0" y="86" width="1023" height="1" fill="#404040" />
<rect x="1023" y="86" width="1" height="18" fill="#c0dcc0" />
</g>
<g><text x="17" y="81" textLength="62" lengthAdjust="spacingAndGlyphs" font-size="14" text-anchor="start" font-weight="normal" fill="#000" filter="url(#crisp)">Chart Area</text></g>
<g shape-rendering="crispEdges">
<rect x="28" y="87" width="979" height="617" fill="#fff" />
<rect x="0" y="87" width="1007" height="17" fill="#c0dcc0" />
<rect x="0" y="87" width="1" height="633" fill="#808080" />
<rect x="1" y="87" width="1" height="617" fill="#404040" />
<rect x="2" y="87" width="25" height="1" fill="#ffffff" />
<rect x="2" y="87" width="1" height="16" fill="#ffffff" />
<rect x="2" y="103" width="26" height="1" fill="#808080" />
<rect x="27" y="87" width="1" height="17" fill="#808080" />
<rect x="28" y="87" width="63" height="1" fill="#ffffff" />
<rect x="28" y="87" width="1" height="16" fill="#ffffff" />
<rect x="28" y="103" width="64" height="1" fill="#808080" />
<rect x="91" y="87" width="1" height="17" fill="#808080" />
<rect x="92" y="87" width="63" height="1" fill="#ffffff" />
<rect x="92" y="87" width="1" height="16" fill="#ffffff" />
<rect x="92" y="103" width="64" height="1" fill="#808080" />
<rect x="155" y="87" width="1" height="17" fill="#808080" />
<rect x="156" y="87" width="92" height="1" fill="#ffffff" />
<rect x="156" y="87" width="1" height="16" fill="#ffffff" />
<rect x="156" y="103" width="93" height="1" fill="#808080" />
<rect x="248" y="87" width="1" height="17" fill="#808080" />
<rect x="249" y="87" width="63" height="1" fill="#ffffff" />
<rect x="249" y="87" width="1" height="16" fill="#ffffff" />
<rect x="249" y="103" width="64" height="1" fill="#808080" />
<rect x="312" y="87" width="1" height="17" fill="#808080" />
<rect x="313" y="87" width="87" height="1" fill="#ffffff" />
<rect x="313" y="87" width="1" height="16" fill="#ffffff" />
<rect x="313" y="103" width="88" height="1" fill="#808080" />
<rect x="400" y="87" width="1" height="17" fill="#808080" />
<rect x="401" y="87" width="63" height="1" fill="#ffffff" />
<rect x="401" y="87" width="1" height="16" fill="#ffffff" />
<rect x="401" y="103" width="64" height="1" fill="#808080" />
<rect x="464" y="87" width="1" height="17" fill="#808080" />
<rect x="465" y="87" width="63" height="1" fill="#ffffff" />
<rect x="465" y="87" width="1" height="16" fill="#ffffff" />
<rect x="465" y="103" width="64" height="1" fill="#808080" />
<rect x="528" y="87" width="1" height="17" fill="#808080" />
<rect x="529" y="87" width="63" height="1" fill="#ffffff" />
<rect x="529" y="87" width="1" height="16" fill="#ffffff" />
<rect x="529" y="103" width="64" height="1" fill="#808080" />
<rect x="592" y="87" width="1" height="17" fill="#808080" />
<rect x="593" y="87" width="63" height="1" fill="#ffffff" />
<rect x="593" y="87" width="1" height="16" fill="#ffffff" />
<rect x="593" y="103" width="64" height="1" fill="#808080" />
<rect x="656" y="87" width="1" height="17" fill="#808080" />
<rect x="657" y="87" width="63" height="1" fill="#ffffff" />
<rect x="657" y="87" width="1" height="16" fill="#ffffff" />
<rect x="657" y="103" width="64" height="1" fill="#808080" />
<rect x="720" y="87" width="1" height="17" fill="#808080" />
<rect x="721" y="87" width="63" height="1" fill="#ffffff" />
<rect x="721" y="87" width="1" height="16" fill="#ffffff" />
<rect x="721" y="103" width="64" height="1" fill="#808080" />
<rect x="784" y="87" width="1" height="17" fill="#808080" />
<rect x="785" y="87" width="63" height="1" fill="#ffffff" />
<rect x="785" y="87" width="1" height="16" fill="#ffffff" />
<rect x="785" y="103" width="64" height="1" fill="#808080" />
<rect x="848" y="87" width="1" height="17" fill="#808080" />
<rect x="849" y="87" width="63" height="1" fill="#ffffff" />
<rect x="849" y="87" width="1" height="16" fill="#ffffff" />
<rect x="849" y="103" width="64" height="1" fill="#808080" />
<rect x="912" y="87" width="1" height="17" fill="#808080" />
<rect x="913" y="87" width="63" height="1" fill="#ffffff" />
<rect x="913" y="87" width="1" height="16" fill="#ffffff" />
<rect x="913" y="103" width="64" height="1" fill="#808080" />
<rect x="976" y="87" width="1" height="17" fill="#808080" />
<rect x="977" y="87" width="30" height="1" fill="#ffffff" />
<rect x="977" y="87" width="1" height="16" fill="#ffffff" />
<rect x="977" y="103" width="30" height="1" fill="#808080" />
<rect x="2" y="104" width="26" height="600" fill="#c0dcc0" />
<rect x="2" y="104" width="25" height="1" fill="#ffffff" />
<rect x="2" y="104" width="1" height="17" fill="#ffffff" />
<rect x="2" y="120" width="26" height="1" fill="#808080" />
<rect x="27" y="104" width="1" height="17" fill="#808080" />
<rect x="2" y="121" width="25" height="1" fill="#ffffff" />
<rect x="2" y="121" width="1" height="17" fill="#ffffff" />
<rect x="2" y="137" width="26" height="1" fill="#808080" />
<rect x="27" y="121" width="1" height="17" fill="#808080" />
<rect x="2" y="138" width="25" height="1" fill="#ffffff" />
<rect x="2" y="138" width="1" height="17" fill="#ffffff" />
<rect x="2" y="154" width="26" height="1" fill="#808080" />
<rect x="27" y="138" width="1" height="17" fill="#808080" />
<rect x="2" y="155" width="25" height="1" fill="#ffffff" />
<rect x="2" y="155" width="1" height="17" fill="#ffffff" />
<rect x="2" y="171" width="26" height="1" fill="#808080" />
<rect x="27" y="155" width="1" height="17" fill="#808080" />
<rect x="2" y="172" width="25" height="1" fill="#ffffff" />
<rect x="2" y="172" width="1" height="17" fill="#ffffff" />
<rect x="2" y="188" width="26" height="1" fill="#808080" />
<rect x="27" y="172" width="1" height="17" fill="#808080" />
<rect x="2" y="189" width="25" height="1" fill="#ffffff" />
<rect x="2" y="189" width="1" height="17" fill="#ffffff" />
<rect x="2" y="205" width="26" height="1" fill="#808080" />
<rect x="27" y="189" width="1" height="17" fill="#808080" />
<rect x="2" y="206" width="25" height="1" fill="#ffffff" />
<rect x="2" y="206" width="1" height="17" fill="#ffffff" />
<rect x="2" y="222" width="26" height="1" fill="#808080" />
<rect x="27" y="206" width="1" height="17" fill="#808080" />
<rect x="2" y="223" width="25" height="1" fill="#ffffff" />
<rect x="2" y="223" width="1" height="17" fill="#ffffff" />
<rect x="2" y="239" width="26" height="1" fill="#808080" />
<rect x="27" y="223" width="1" height="17" fill="#808080" />
<rect x="2" y="240" width="25" height="1" fill="#ffffff" />
<rect x="2" y="240" width="1" height="17" fill="#ffffff" />
<rect x="2" y="256" width="26" height="1" fill="#808080" />
<rect x="27" y="240" width="1" height="17" fill="#808080" />
<rect x="2" y="257" width="25" height="1" fill="#ffffff" />
<rect x="2" y="257" width="1" height="17" fill="#ffffff" />
<rect x="2" y="273" width="26" height="1" fill="#808080" />
<rect x="27" y="257" width="1" height="17" fill="#808080" />
<rect x="2" y="274" width="25" height="1" fill="#ffffff" />
<rect x="2" y="274" width="1" height="17" fill="#ffffff" />
<rect x="2" y="290" width="26" height="1" fill="#808080" />
<rect x="27" y="274" width="1" height="17" fill="#808080" />
<rect x="2" y="291" width="25" height="1" fill="#ffffff" />
<rect x="2" y="291" width="1" height="17" fill="#ffffff" />
<rect x="2" y="307" width="26" height="1" fill="#808080" />
<rect x="27" y="291" width="1" height="17" fill="#808080" />
<rect x="2" y="308" width="25" height="1" fill="#ffffff" />
<rect x="2" y="308" width="1" height="17" fill="#ffffff" />
<rect x="2" y="324" width="26" height="1" fill="#808080" />
<rect x="27" y="308" width="1" height="17" fill="#808080" />
<rect x="2" y="325" width="25" height="1" fill="#ffffff" />
<rect x="2" y="325" width="1" height="17" fill="#ffffff" />
<rect x="2" y="341" width="26" height="1" fill="#808080" />
<rect x="27" y="325" width="1" height="17" fill="#808080" />
<rect x="2" y="342" width="25" height="1" fill="#ffffff" />
<rect x="2" y="342" width="1" height="17" fill="#ffffff" />
<rect x="2" y="358" width="26" height="1" fill="#808080" />
<rect x="27" y="342" width="1" height="17" fill="#808080" />
<rect x="2" y="359" width="25" height="1" fill="#ffffff" />
<rect x="2" y="359" width="1" height="17" fill="#ffffff" />
<rect x="2" y="375" width="26" height="1" fill="#808080" />
<rect x="27" y="359" width="1" height="17" fill="#808080" />
<rect x="2" y="376" width="25" height="1" fill="#ffffff" />
<rect x="2" y="376" width="1" height="17" fill="#ffffff" />
<rect x="2" y="392" width="26" height="1" fill="#808080" />
<rect x="27" y="376" width="1" height="17" fill="#808080" />
<rect x="2" y="393" width="25" height="1" fill="#ffffff" />
<rect x="2" y="393" width="1" height="17" fill="#ffffff" />
<rect x="2" y="409" width="26" height="1" fill="#808080" />
<rect x="27" y="393" width="1" height="17" fill="#808080" />
<rect x="2" y="410" width="25" height="1" fill="#ffffff" />
<rect x="2" y="410" width="1" height="17" fill="#ffffff" />
<rect x="2" y="426" width="26" height="1" fill="#808080" />
<rect x="27" y="410" width="1" height="17" fill="#808080" />
<rect x="2" y="427" width="25" height="1" fill="#ffffff" />
<rect x="2" y="427" width="1" height="17" fill="#ffffff" />
<rect x="2" y="443" width="26" height="1" fill="#808080" />
<rect x="27" y="427" width="1" height="17" fill="#808080" />
<rect x="2" y="444" width="25" height="1" fill="#ffffff" />
<rect x="2" y="444" width="1" height="17" fill="#ffffff" />
<rect x="2" y="460" width="26" height="1" fill="#808080" />
<rect x="27" y="444" width="1" height="17" fill="#808080" />
<rect x="2" y="461" width="25" height="1" fill="#ffffff" />
<rect x="2" y="461" width="1" height="17" fill="#ffffff" />
<rect x="2" y="477" width="26" height="1" fill="#808080" />
<rect x="27" y="461" width="1" height="17" fill="#808080" />
<rect x="2" y="478" width="25" height="1" fill="#ffffff" />
<rect x="2" y="478" width="1" height="17" fill="#ffffff" />
<rect x="2" y="494" width="26" height="1" fill="#808080" />
<rect x="27" y="478" width="1" height="17" fill="#808080" />
<rect x="2" y="495" width="25" height="1" fill="#ffffff" />
<rect x="2" y="495" width="1" height="17" fill="#ffffff" />
<rect x="2" y="511" width="26" height="1" fill="#808080" />
<rect x="27" y="495" width="1" height="17" fill="#808080" />
<rect x="2" y="512" width="25" height="1" fill="#ffffff" />
<rect x="2" y="512" width="1" height="17" fill="#ffffff" />
<rect x="2" y="528" width="26" height="1" fill="#808080" />
<rect x="27" y="512" width="1" height="17" fill="#808080" />
<rect x="2" y="529" width="25" height="1" fill="#ffffff" />
<rect x="2" y="529" width="1" height="17" fill="#ffffff" />
<rect x="2" y="545" width="26" height="1" fill="#808080" />
<rect x="27" y="529" width="1" height="17" fill="#808080" />
<rect x="2" y="546" width="25" height="1" fill="#ffffff" />
<rect x="2" y="546" width="1" height="17" fill="#ffffff" />
<rect x="2" y="562" width="26" height="1" fill="#808080" />
<rect x="27" y="546" width="1" height="17" fill="#808080" />
<rect x="2" y="563" width="25" height="1" fill="#ffffff" />
<rect x="2" y="563" width="1" height="17" fill="#ffffff" />
<rect x="2" y="579" width="26" height="1" fill="#808080" />
<rect x="27" y="563" width="1" height="17" fill="#808080" />
<rect x="2" y="580" width="25" height="1" fill="#ffffff" />
<rect x="2" y="580" width="1" height="17" fill="#ffffff" />
<rect x="2" y="596" width="26" height="1" fill="#808080" />
<rect x="27" y="580" width="1" height="17" fill="#808080" />
<rect x="2" y="597" width="25" height="1" fill="#ffffff" />
<rect x="2" y="597" width="1" height="17" fill="#ffffff" />
<rect x="2" y="613" width="26" height="1" fill="#808080" />
<rect x="27" y="597" width="1" height="17" fill="#808080" />
<rect x="2" y="614" width="25" height="1" fill="#ffffff" />
<rect x="2" y="614" width="1" height="17" fill="#ffffff" />
<rect x="2" y="630" width="26" height="1" fill="#808080" />
<rect x="27" y="614" width="1" height="17" fill="#808080" />
<rect x="2" y="631" width="25" height="1" fill="#ffffff" />
<rect x="2" y="631" width="1" height="17" fill="#ffffff" />
<rect x="2" y="647" width="26" height="1" fill="#808080" />
<rect x="27" y="631" width="1" height="17" fill="#808080" />
<rect x="2" y="648" width="25" height="1" fill="#ffffff" />
<rect x="2" y="648" width="1" height="17" fill="#ffffff" />
<rect x="2" y="664" width="26" height="1" fill="#808080" />
<rect x="27" y="648" width="1" height="17" fill="#808080" />
<rect x="2" y="665" width="25" height="1" fill="#ffffff" />
<rect x="2" y="665" width="1" height="17" fill="#ffffff" />
<rect x="2" y="681" width="26" height="1" fill="#808080" />
<rect x="27" y="665" width="1" height="17" fill="#808080" />
<rect x="2" y="682" width="25" height="1" fill="#ffffff" />
<rect x="2" y="682" width="1" height="17" fill="#ffffff" />
<rect x="2" y="698" width="26" height="1" fill="#808080" />
<rect x="27" y="682" width="1" height="17" fill="#808080" />
<rect x="2" y="699" width="25" height="1" fill="#ffffff" />
<rect x="2" y="699" width="1" height="5" fill="#ffffff" />
<rect x="27" y="699" width="1" height="5" fill="#808080" />
<rect x="91" y="104" width="1" height="600" fill="#c0c0c0" />
<rect x="155" y="104" width="1" height="600" fill="#c0c0c0" />
<rect x="248" y="104" width="1" height="600" fill="#c0c0c0" />
<rect x="312" y="104" width="1" height="600" fill="#c0c0c0" />
<rect x="400" y="104" width="1" height="600" fill="#c0c0c0" />
<rect x="464" y="104" width="1" height="600" fill="#c0c0c0" />
<rect x="528" y="104" width="1" height="600" fill="#c0c0c0" />
<rect x="592" y="104" width="1" height="600" fill="#c0c0c0" />
<rect x="656" y="104" width="1" height="600" fill="#c0c0c0" />
<rect x="720" y="104" width="1" height="600" fill="#c0c0c0" />
<rect x="784" y="104" width="1" height="600" fill="#c0c0c0" />
<rect x="848" y="104" width="1" height="600" fill="#c0c0c0" />
<rect x="912" y="104" width="1" height="600" fill="#c0c0c0" />
<rect x="976" y="104" width="1" height="600" fill="#c0c0c0" />
<rect x="28" y="120" width="979" height="1" fill="#c0c0c0" />
<rect x="28" y="137" width="979" height="1" fill="#c0c0c0" />
<rect x="28" y="154" width="979" height="1" fill="#c0c0c0" />
<rect x="28" y="171" width="979" height="1" fill="#c0c0c0" />
<rect x="28" y="188" width="979" height="1" fill="#c0c0c0" />
<rect x="28" y="205" width="979" height="1" fill="#c0c0c0" />
<rect x="28" y="222" width="979" height="1" fill="#c0c0c0" />
<rect x="28" y="239" width="979" height="1" fill="#c0c0c0" />
<rect x="28" y="256" width="979" height="1" fill="#c0c0c0" />
<rect x="28" y="273" width="979" height="1" fill="#c0c0c0" />
<rect x="28" y="290" width="979" height="1" fill="#c0c0c0" />
<rect x="28" y="307" width="979" height="1" fill="#c0c0c0" />
<rect x="28" y="324" width="979" height="1" fill="#c0c0c0" />
<rect x="28" y="341" width="979" height="1" fill="#c0c0c0" />
<rect x="28" y="358" width="979" height="1" fill="#c0c0c0" />
<rect x="28" y="375" width="979" height="1" fill="#c0c0c0" />
<rect x="28" y="392" width="979" height="1" fill="#c0c0c0" />
<rect x="28" y="409" width="979" height="1" fill="#c0c0c0" />
<rect x="28" y="426" width="979" height="1" fill="#c0c0c0" />
<rect x="28" y="443" width="979" height="1" fill="#c0c0c0" />
<rect x="28" y="460" width="979" height="1" fill="#c0c0c0" />
<rect x="28" y="477" width="979" height="1" fill="#c0c0c0" />
<rect x="28" y="494" width="979" height="1" fill="#c0c0c0" />
<rect x="28" y="511" width="979" height="1" fill="#c0c0c0" />
<rect x="28" y="528" width="979" height="1" fill="#c0c0c0" />
<rect x="28" y="545" width="979" height="1" fill="#c0c0c0" />
<rect x="28" y="562" width="979" height="1" fill="#c0c0c0" />
<rect x="28" y="579" width="979" height="1" fill="#c0c0c0" />
<rect x="28" y="596" width="979" height="1" fill="#c0c0c0" />
<rect x="28" y="613" width="979" height="1" fill="#c0c0c0" />
<rect x="28" y="630" width="979" height="1" fill="#c0c0c0" />
<rect x="28" y="647" width="979" height="1" fill="#c0c0c0" />
<rect x="28" y="664" width="979" height="1" fill="#c0c0c0" />
<rect x="28" y="681" width="979" height="1" fill="#c0c0c0" />
<rect x="28" y="698" width="979" height="1" fill="#c0c0c0" />
</g>
<g><text transform="translate(59.5,100) scale(1.0,1)" font-size="14" text-anchor="middle" font-weight="normal" fill="#000" filter="url(#crisp)">A</text></g>
<g><text transform="translate(123.5,100) scale(1.0,1)" font-size="14" text-anchor="middle" font-weight="normal" fill="#000" filter="url(#crisp)">B</text></g>
<g><text transform="translate(202.0,100) scale(1.0,1)" font-size="14" text-anchor="middle" font-weight="normal" fill="#000" filter="url(#crisp)">C</text></g>
<g><text transform="translate(280.5,100) scale(1.0,1)" font-size="14" text-anchor="middle" font-weight="normal" fill="#000" filter="url(#crisp)">D</text></g>
<g><text transform="translate(356.5,100) scale(1.0,1)" font-size="14" text-anchor="middle" font-weight="normal" fill="#000" filter="url(#crisp)">E</text></g>
<g><text transform="translate(432.5,100) scale(1.0,1)" font-size="14" text-anchor="middle" font-weight="normal" fill="#000" filter="url(#crisp)">F</text></g>
<g><text transform="translate(496.5,100) scale(1.0,1)" font-size="14" text-anchor="middle" font-weight="normal" fill="#000" filter="url(#crisp)">G</text></g>
<g><text transform="translate(560.5,100) scale(1.0,1)" font-size="14" text-anchor="middle" font-weight="normal" fill="#000" filter="url(#crisp)">H</text></g>
<g><text transform="translate(624.5,100) scale(1.0,1)" font-size="14" text-anchor="middle" font-weight="normal" fill="#000" filter="url(#crisp)">I</text></g>
<g><text transform="translate(688.5,100) scale(1.0,1)" font-size="14" text-anchor="middle" font-weight="normal" fill="#000" filter="url(#crisp)">J</text></g>
<g><text transform="translate(752.5,100) scale(1.0,1)" font-size="14" text-anchor="middle" font-weight="normal" fill="#000" filter="url(#crisp)">K</text></g>
<g><text transform="translate(816.5,100) scale(1.0,1)" font-size="14" text-anchor="middle" font-weight="normal" fill="#000" filter="url(#crisp)">L</text></g>
<g><text transform="translate(880.5,100) scale(1.0,1)" font-size="14" text-anchor="middle" font-weight="normal" fill="#000" filter="url(#crisp)">M</text></g>
<g><text transform="translate(944.5,100) scale(1.0,1)" font-size="14" text-anchor="middle" font-weight="normal" fill="#000" filter="url(#crisp)">N</text></g>
<g clip-path="url(#colclip)"><text transform="translate(1008.5,100) scale(1.0,1)" font-size="14" text-anchor="middle" font-weight="normal" fill="#000" filter="url(#crisp)">O</text></g>
<g><text transform="translate(14.5,117) scale(0.9,1)" font-size="14" text-anchor="middle" font-weight="normal" fill="#000" filter="url(#crisp)">1</text></g>
<g><text transform="translate(14.5,134) scale(0.9,1)" font-size="14" text-anchor="middle" font-weight="normal" fill="#000" filter="url(#crisp)">2</text></g>
<g><text transform="translate(14.5,151) scale(0.9,1)" font-size="14" text-anchor="middle" font-weight="normal" fill="#000" filter="url(#crisp)">3</text></g>
<g><text transform="translate(14.5,168) scale(0.9,1)" font-size="14" text-anchor="middle" font-weight="normal" fill="#000" filter="url(#crisp)">4</text></g>
<g><text transform="translate(14.5,185) scale(0.9,1)" font-size="14" text-anchor="middle" font-weight="normal" fill="#000" filter="url(#crisp)">5</text></g>
<g><text transform="translate(14.5,202) scale(0.9,1)" font-size="14" text-anchor="middle" font-weight="normal" fill="#000" filter="url(#crisp)">6</text></g>
<g><text transform="translate(14.5,219) scale(0.9,1)" font-size="14" text-anchor="middle" font-weight="normal" fill="#000" filter="url(#crisp)">7</text></g>
<g><text transform="translate(14.5,236) scale(0.9,1)" font-size="14" text-anchor="middle" font-weight="normal" fill="#000" filter="url(#crisp)">8</text></g>
<g><text transform="translate(14.5,253) scale(0.9,1)" font-size="14" text-anchor="middle" font-weight="normal" fill="#000" filter="url(#crisp)">9</text></g>
<g><text transform="translate(14.5,270) scale(0.9,1)" font-size="14" text-anchor="middle" font-weight="normal" fill="#000" filter="url(#crisp)">10</text></g>
<g><text transform="translate(14.5,287) scale(0.9,1)" font-size="14" text-anchor="middle" font-weight="normal" fill="#000" filter="url(#crisp)">11</text></g>
<g><text transform="translate(14.5,304) scale(0.9,1)" font-size="14" text-anchor="middle" font-weight="normal" fill="#000" filter="url(#crisp)">12</text></g>
<g><text transform="translate(14.5,321) scale(0.9,1)" font-size="14" text-anchor="middle" font-weight="normal" fill="#000" filter="url(#crisp)">13</text></g>
<g><text transform="translate(14.5,338) scale(0.9,1)" font-size="14" text-anchor="middle" font-weight="normal" fill="#000" filter="url(#crisp)">14</text></g>
<g><text transform="translate(14.5,355) scale(0.9,1)" font-size="14" text-anchor="middle" font-weight="normal" fill="#000" filter="url(#crisp)">15</text></g>
<g><text transform="translate(14.5,372) scale(0.9,1)" font-size="14" text-anchor="middle" font-weight="normal" fill="#000" filter="url(#crisp)">16</text></g>
<g><text transform="translate(14.5,389) scale(0.9,1)" font-size="14" text-anchor="middle" font-weight="normal" fill="#000" filter="url(#crisp)">17</text></g>
<g><text transform="translate(14.5,406) scale(0.9,1)" font-size="14" text-anchor="middle" font-weight="normal" fill="#000" filter="url(#crisp)">18</text></g>
<g><text transform="translate(14.5,423) scale(0.9,1)" font-size="14" text-anchor="middle" font-weight="normal" fill="#000" filter="url(#crisp)">19</text></g>
<g><text transform="translate(14.5,440) scale(0.9,1)" font-size="14" text-anchor="middle" font-weight="normal" fill="#000" filter="url(#crisp)">20</text></g>
<g><text transform="translate(14.5,457) scale(0.9,1)" font-size="14" text-anchor="middle" font-weight="normal" fill="#000" filter="url(#crisp)">21</text></g>
<g><text transform="translate(14.5,474) scale(0.9,1)" font-size="14" text-anchor="middle" font-weight="normal" fill="#000" filter="url(#crisp)">22</text></g>
<g><text transform="translate(14.5,491) scale(0.9,1)" font-size="14" text-anchor="middle" font-weight="normal" fill="#000" filter="url(#crisp)">23</text></g>
<g><text transform="translate(14.5,508) scale(0.9,1)" font-size="14" text-anchor="middle" font-weight="normal" fill="#000" filter="url(#crisp)">24</text></g>
<g><text transform="translate(14.5,525) scale(0.9,1)" font-size="14" text-anchor="middle" font-weight="normal" fill="#000" filter="url(#crisp)">25</text></g>
<g><text transform="translate(14.5,542) scale(0.9,1)" font-size="14" text-anchor="middle" font-weight="normal" fill="#000" filter="url(#crisp)">26</text></g>
<g><text transform="translate(14.5,559) scale(0.9,1)" font-size="14" text-anchor="middle" font-weight="normal" fill="#000" filter="url(#crisp)">27</text></g>
<g><text transform="translate(14.5,576) scale(0.9,1)" font-size="14" text-anchor="middle" font-weight="normal" fill="#000" filter="url(#crisp)">28</text></g>
<g><text transform="translate(14.5,593) scale(0.9,1)" font-size="14" text-anchor="middle" font-weight="normal" fill="#000" filter="url(#crisp)">29</text></g>
<g><text transform="translate(14.5,610) scale(0.9,1)" font-size="14" text-anchor="middle" font-weight="normal" fill="#000" filter="url(#crisp)">30</text></g>
<g><text transform="translate(14.5,627) scale(0.9,1)" font-size="14" text-anchor="middle" font-weight="normal" fill="#000" filter="url(#crisp)">31</text></g>
<g><text transform="translate(14.5,644) scale(0.9,1)" font-size="14" text-anchor="middle" font-weight="normal" fill="#000" filter="url(#crisp)">32</text></g>
<g><text transform="translate(14.5,661) scale(0.9,1)" font-size="14" text-anchor="middle" font-weight="normal" fill="#000" filter="url(#crisp)">33</text></g>
<g><text transform="translate(14.5,678) scale(0.9,1)" font-size="14" text-anchor="middle" font-weight="normal" fill="#000" filter="url(#crisp)">34</text></g>
<g><text transform="translate(14.5,695) scale(0.9,1)" font-size="14" text-anchor="middle" font-weight="normal" fill="#000" filter="url(#crisp)">35</text></g>
<g><text transform="translate(14.5,712) scale(0.9,1)" font-size="14" text-anchor="middle" font-weight="normal" fill="#000" filter="url(#crisp)">36</text></g>
<g><text x="30" y="117" textLength="29.5" lengthAdjust="spacingAndGlyphs" font-size="14" text-anchor="start" font-weight="normal" fill="#000" filter="url(#crisp)">RPM</text></g>
<g><text x="97.5" y="117" textLength="52.5" lengthAdjust="spacingAndGlyphs" font-size="14" text-anchor="start" font-weight="normal" fill="#000" filter="url(#crisp)">182 BHP</text></g>
<g><text x="158" y="117" textLength="79" lengthAdjust="spacingAndGlyphs" font-size="14" text-anchor="start" font-weight="normal" fill="#000" filter="url(#crisp)">182 TORQUE</text></g>
<g><text x="250.5" y="117" textLength="52.5" lengthAdjust="spacingAndGlyphs" font-size="14" text-anchor="start" font-weight="normal" fill="#000" filter="url(#crisp)">172 BHP</text></g>
<g><text x="314" y="117" textLength="80" lengthAdjust="spacingAndGlyphs" font-size="14" text-anchor="start" font-weight="normal" fill="#000" filter="url(#crisp)">172 TORQUE</text></g>
<g><text transform="translate(89,134) scale(0.9,1)" font-size="14" text-anchor="end" font-weight="normal" fill="#000" filter="url(#crisp)">1500</text></g>
<g><text transform="translate(153,134) scale(0.9,1)" font-size="14" text-anchor="end" font-weight="normal" fill="#000" filter="url(#crisp)">24.1</text></g>
<g><text transform="translate(246,134) scale(0.9,1)" font-size="14" text-anchor="end" font-weight="normal" fill="#000" filter="url(#crisp)">84.4</text></g>
<g><text transform="translate(310,134) scale(0.9,1)" font-size="14" text-anchor="end" font-weight="normal" fill="#000" filter="url(#crisp)">25.6</text></g>
<g><text transform="translate(398,134) scale(0.9,1)" font-size="14" text-anchor="end" font-weight="normal" fill="#000" filter="url(#crisp)">89.6</text></g>
<g><text transform="translate(89,151) scale(0.9,1)" font-size="14" text-anchor="end" font-weight="normal" fill="#000" filter="url(#crisp)">2000</text></g>
<g><text transform="translate(153,151) scale(0.9,1)" font-size="14" text-anchor="end" font-weight="normal" fill="#000" filter="url(#crisp)">44.3</text></g>
<g><text transform="translate(246,151) scale(0.9,1)" font-size="14" text-anchor="end" font-weight="normal" fill="#000" filter="url(#crisp)">116.3</text></g>
<g><text transform="translate(310,151) scale(0.9,1)" font-size="14" text-anchor="end" font-weight="normal" fill="#000" filter="url(#crisp)">43.8</text></g>
<g><text transform="translate(398,151) scale(0.9,1)" font-size="14" text-anchor="end" font-weight="normal" fill="#000" filter="url(#crisp)">115</text></g>
<g><text transform="translate(89,168) scale(0.9,1)" font-size="14" text-anchor="end" font-weight="normal" fill="#000" filter="url(#crisp)">2500</text></g>
<g><text transform="translate(153,168) scale(0.9,1)" font-size="14" text-anchor="end" font-weight="normal" fill="#000" filter="url(#crisp)">56</text></g>
<g><text transform="translate(246,168) scale(0.9,1)" font-size="14" text-anchor="end" font-weight="normal" fill="#000" filter="url(#crisp)">117.6</text></g>
<g><text transform="translate(310,168) scale(0.9,1)" font-size="14" text-anchor="end" font-weight="normal" fill="#000" filter="url(#crisp)">57.3</text></g>
<g><text transform="translate(398,168) scale(0.9,1)" font-size="14" text-anchor="end" font-weight="normal" fill="#000" filter="url(#crisp)">120.4</text></g>
<g><text transform="translate(89,185) scale(0.9,1)" font-size="14" text-anchor="end" font-weight="normal" fill="#000" filter="url(#crisp)">3000</text></g>
<g><text transform="translate(153,185) scale(0.9,1)" font-size="14" text-anchor="end" font-weight="normal" fill="#000" filter="url(#crisp)">76.8</text></g>
<g><text transform="translate(246,185) scale(0.9,1)" font-size="14" text-anchor="end" font-weight="normal" fill="#000" filter="url(#crisp)">134.5</text></g>
<g><text transform="translate(310,185) scale(0.9,1)" font-size="14" text-anchor="end" font-weight="normal" fill="#000" filter="url(#crisp)">72.8</text></g>
<g><text transform="translate(398,185) scale(0.9,1)" font-size="14" text-anchor="end" font-weight="normal" fill="#000" filter="url(#crisp)">126.6</text></g>
<g><text transform="translate(89,202) scale(0.9,1)" font-size="14" text-anchor="end" font-weight="normal" fill="#000" filter="url(#crisp)">3500</text></g>
<g><text transform="translate(153,202) scale(0.9,1)" font-size="14" text-anchor="end" font-weight="normal" fill="#000" filter="url(#crisp)">91.2</text></g>
<g><text transform="translate(246,202) scale(0.9,1)" font-size="14" text-anchor="end" font-weight="normal" fill="#000" filter="url(#crisp)">136.9</text></g>
<g><text transform="translate(310,202) scale(0.9,1)" font-size="14" text-anchor="end" font-weight="normal" fill="#000" filter="url(#crisp)">84.7</text></g>
<g><text transform="translate(398,202) scale(0.9,1)" font-size="14" text-anchor="end" font-weight="normal" fill="#000" filter="url(#crisp)">127.1</text></g>
<g><text transform="translate(89,219) scale(0.9,1)" font-size="14" text-anchor="end" font-weight="normal" fill="#000" filter="url(#crisp)">4000</text></g>
<g><text transform="translate(153,219) scale(0.9,1)" font-size="14" text-anchor="end" font-weight="normal" fill="#000" filter="url(#crisp)">102</text></g>
<g><text transform="translate(246,219) scale(0.9,1)" font-size="14" text-anchor="end" font-weight="normal" fill="#000" filter="url(#crisp)">133.9</text></g>
<g><text transform="translate(310,219) scale(0.9,1)" font-size="14" text-anchor="end" font-weight="normal" fill="#000" filter="url(#crisp)">100.1</text></g>
<g><text transform="translate(398,219) scale(0.9,1)" font-size="14" text-anchor="end" font-weight="normal" fill="#000" filter="url(#crisp)">131.4</text></g>
<g><text transform="translate(89,236) scale(0.9,1)" font-size="14" text-anchor="end" font-weight="normal" fill="#000" filter="url(#crisp)">4500</text></g>
<g><text transform="translate(153,236) scale(0.9,1)" font-size="14" text-anchor="end" font-weight="normal" fill="#000" filter="url(#crisp)">118.7</text></g>
<g><text transform="translate(246,236) scale(0.9,1)" font-size="14" text-anchor="end" font-weight="normal" fill="#000" filter="url(#crisp)">138.5</text></g>
<g><text transform="translate(310,236) scale(0.9,1)" font-size="14" text-anchor="end" font-weight="normal" fill="#000" filter="url(#crisp)">123.9</text></g>
<g><text transform="translate(398,236) scale(0.9,1)" font-size="14" text-anchor="end" font-weight="normal" fill="#000" filter="url(#crisp)">144.6</text></g>
<g><text transform="translate(89,253) scale(0.9,1)" font-size="14" text-anchor="end" font-weight="normal" fill="#000" filter="url(#crisp)">5000</text></g>
<g><text transform="translate(153,253) scale(0.9,1)" font-size="14" text-anchor="end" font-weight="normal" fill="#000" filter="url(#crisp)">131.3</text></g>
<g><text transform="translate(246,253) scale(0.9,1)" font-size="14" text-anchor="end" font-weight="normal" fill="#000" filter="url(#crisp)">137.9</text></g>
<g><text transform="translate(310,253) scale(0.9,1)" font-size="14" text-anchor="end" font-weight="normal" fill="#000" filter="url(#crisp)">136.3</text></g>
<g><text transform="translate(398,253) scale(0.9,1)" font-size="14" text-anchor="end" font-weight="normal" fill="#000" filter="url(#crisp)">143.2</text></g>
<g><text transform="translate(89,270) scale(0.9,1)" font-size="14" text-anchor="end" font-weight="normal" fill="#000" filter="url(#crisp)">5500</text></g>
<g><text transform="translate(153,270) scale(0.9,1)" font-size="14" text-anchor="end" font-weight="normal" fill="#000" filter="url(#crisp)">157.4</text></g>
<g><text transform="translate(246,270) scale(0.9,1)" font-size="14" text-anchor="end" font-weight="normal" fill="#000" filter="url(#crisp)">150.3</text></g>
<g><text transform="translate(310,270) scale(0.9,1)" font-size="14" text-anchor="end" font-weight="normal" fill="#000" filter="url(#crisp)">153.7</text></g>
<g><text transform="translate(398,270) scale(0.9,1)" font-size="14" text-anchor="end" font-weight="normal" fill="#000" filter="url(#crisp)">146.8</text></g>
<g><text transform="translate(89,287) scale(0.9,1)" font-size="14" text-anchor="end" font-weight="normal" fill="#000" filter="url(#crisp)">6000</text></g>
<g><text transform="translate(153,287) scale(0.9,1)" font-size="14" text-anchor="end" font-weight="normal" fill="#000" filter="url(#crisp)">167.6</text></g>
<g><text transform="translate(246,287) scale(0.9,1)" font-size="14" text-anchor="end" font-weight="normal" fill="#000" filter="url(#crisp)">146.7</text></g>
<g><text transform="translate(310,287) scale(0.9,1)" font-size="14" text-anchor="end" font-weight="normal" fill="#000" filter="url(#crisp)">164.4</text></g>
<g><text transform="translate(398,287) scale(0.9,1)" font-size="14" text-anchor="end" font-weight="normal" fill="#000" filter="url(#crisp)">143.9</text></g>
<g><text transform="translate(89,304) scale(0.9,1)" font-size="14" text-anchor="end" font-weight="normal" fill="#000" filter="url(#crisp)">6500</text></g>
<g><text transform="translate(153,304) scale(0.9,1)" font-size="14" text-anchor="end" font-weight="normal" fill="#000" filter="url(#crisp)">177.8</text></g>
<g><text transform="translate(246,304) scale(0.9,1)" font-size="14" text-anchor="end" font-weight="normal" fill="#000" filter="url(#crisp)">143.7</text></g>
<g><text transform="translate(310,304) scale(0.9,1)" font-size="14" text-anchor="end" font-weight="normal" fill="#000" filter="url(#crisp)">171</text></g>
<g><text transform="translate(398,304) scale(0.9,1)" font-size="14" text-anchor="end" font-weight="normal" fill="#000" filter="url(#crisp)">138.2</text></g>
<g><text transform="translate(89,321) scale(0.9,1)" font-size="14" text-anchor="end" font-weight="normal" fill="#000" filter="url(#crisp)">7000</text></g>
<g><text transform="translate(153,321) scale(0.9,1)" font-size="14" text-anchor="end" font-weight="normal" fill="#000" filter="url(#crisp)">178.4</text></g>
<g><text transform="translate(246,321) scale(0.9,1)" font-size="14" text-anchor="end" font-weight="normal" fill="#000" filter="url(#crisp)">133.9</text></g>
<g><text transform="translate(310,321) scale(0.9,1)" font-size="14" text-anchor="end" font-weight="normal" fill="#000" filter="url(#crisp)">170.8</text></g>
<g><text transform="translate(398,321) scale(0.9,1)" font-size="14" text-anchor="end" font-weight="normal" fill="#000" filter="url(#crisp)">128.1</text></g>
<g shape-rendering="crispEdges">
<rect x="28.5" y="121.5" width="62" height="202" fill="none" stroke="#a000c0"/>
<rect x="88" y="321" width="5" height="5" fill="#a000c0" />
<rect x="92.5" y="104.5" width="307" height="15" fill="none" stroke="#008000"/>
<rect x="397" y="117" width="5" height="5" fill="#008000" />
<rect x="92.5" y="121.5" width="307" height="202" fill="none" stroke="#0000ff"/>
<rect x="397" y="321" width="5" height="5" fill="#0000ff" />
</g>
<g clip-path="url(#chartclip)">
<g shape-rendering="crispEdges">
<rect x="29" y="327" width="759" height="420" fill="#fff" />
<rect x="29" y="327" width="1" height="414" fill="#000" />
<rect x="787" y="327" width="1" height="414" fill="#000" />
<rect x="29" y="327" width="759" height="1" fill="#000" />
<rect x="29" y="327" width="7" height="7" fill="#000" />
<rect x="781" y="327" width="7" height="7" fill="#000" />
<rect x="405" y="327" width="7" height="7" fill="#000" />
<rect x="29" y="527" width="7" height="7" fill="#000" />
<rect x="781" y="527" width="7" height="7" fill="#000" />
<rect x="118" y="408" width="511" height="245" fill="#c0c0c0" />
<rect x="117" y="408" width="512" height="1" fill="#808080" />
<rect x="628" y="408" width="1" height="246" fill="#808080" />
<rect x="112" y="653" width="6" height="1" fill="#000" />
<rect x="118" y="629" width="510" height="1" fill="#000" />
<rect x="112" y="629" width="6" height="1" fill="#000" />
<rect x="118" y="604" width="510" height="1" fill="#000" />
<rect x="112" y="604" width="6" height="1" fill="#000" />
<rect x="118" y="580" width="510" height="1" fill="#000" />
<rect x="112" y="580" width="6" height="1" fill="#000" />
<rect x="118" y="555" width="510" height="1" fill="#000" />
<rect x="112" y="555" width="6" height="1" fill="#000" />
<rect x="118" y="531" width="510" height="1" fill="#000" />
<rect x="112" y="531" width="6" height="1" fill="#000" />
<rect x="118" y="506" width="510" height="1" fill="#000" />
<rect x="112" y="506" width="6" height="1" fill="#000" />
<rect x="118" y="482" width="510" height="1" fill="#000" />
<rect x="112" y="482" width="6" height="1" fill="#000" />
<rect x="118" y="457" width="510" height="1" fill="#000" />
<rect x="112" y="457" width="6" height="1" fill="#000" />
<rect x="118" y="433" width="510" height="1" fill="#000" />
<rect x="112" y="433" width="6" height="1" fill="#000" />
<rect x="112" y="408" width="6" height="1" fill="#000" />
<rect x="117" y="408" width="1" height="246" fill="#000" />
<rect x="117" y="653" width="512" height="1" fill="#000" />
<rect x="117" y="654" width="1" height="5" fill="#000" />
<rect x="160" y="654" width="1" height="5" fill="#000" />
<rect x="202" y="654" width="1" height="5" fill="#000" />
<rect x="245" y="654" width="1" height="5" fill="#000" />
<rect x="287" y="654" width="1" height="5" fill="#000" />
<rect x="330" y="654" width="1" height="5" fill="#000" />
<rect x="373" y="654" width="1" height="5" fill="#000" />
<rect x="415" y="654" width="1" height="5" fill="#000" />
<rect x="458" y="654" width="1" height="5" fill="#000" />
<rect x="500" y="654" width="1" height="5" fill="#000" />
<rect x="543" y="654" width="1" height="5" fill="#000" />
<rect x="585" y="654" width="1" height="5" fill="#000" />
<rect x="628" y="654" width="1" height="5" fill="#000" />
</g>
<text x="104" y="659" font-size="16" text-anchor="end" font-weight="normal" fill="#000"  filter="url(#crisp)">0</text>
<text x="104" y="635" font-size="16" text-anchor="end" font-weight="normal" fill="#000"  filter="url(#crisp)">20</text>
<text x="104" y="610" font-size="16" text-anchor="end" font-weight="normal" fill="#000"  filter="url(#crisp)">40</text>
<text x="104" y="586" font-size="16" text-anchor="end" font-weight="normal" fill="#000"  filter="url(#crisp)">60</text>
<text x="104" y="561" font-size="16" text-anchor="end" font-weight="normal" fill="#000"  filter="url(#crisp)">80</text>
<text x="104" y="537" font-size="16" text-anchor="end" font-weight="normal" fill="#000"  filter="url(#crisp)">100</text>
<text x="104" y="512" font-size="16" text-anchor="end" font-weight="normal" fill="#000"  filter="url(#crisp)">120</text>
<text x="104" y="488" font-size="16" text-anchor="end" font-weight="normal" fill="#000"  filter="url(#crisp)">140</text>
<text x="104" y="463" font-size="16" text-anchor="end" font-weight="normal" fill="#000"  filter="url(#crisp)">160</text>
<text x="104" y="439" font-size="16" text-anchor="end" font-weight="normal" fill="#000"  filter="url(#crisp)">180</text>
<text x="104" y="414" font-size="16" text-anchor="end" font-weight="normal" fill="#000"  filter="url(#crisp)">200</text>
<text x="138.29166666666666" y="682" font-size="16" text-anchor="middle" font-weight="normal" fill="#000"  filter="url(#crisp)">1500</text>
<text x="180.875" y="682" font-size="16" text-anchor="middle" font-weight="normal" fill="#000"  filter="url(#crisp)">2000</text>
<text x="223.45833333333334" y="682" font-size="16" text-anchor="middle" font-weight="normal" fill="#000"  filter="url(#crisp)">2500</text>
<text x="266.0416666666667" y="682" font-size="16" text-anchor="middle" font-weight="normal" fill="#000"  filter="url(#crisp)">3000</text>
<text x="308.625" y="682" font-size="16" text-anchor="middle" font-weight="normal" fill="#000"  filter="url(#crisp)">3500</text>
<text x="351.20833333333337" y="682" font-size="16" text-anchor="middle" font-weight="normal" fill="#000"  filter="url(#crisp)">4000</text>
<text x="393.7916666666667" y="682" font-size="16" text-anchor="middle" font-weight="normal" fill="#000"  filter="url(#crisp)">4500</text>
<text x="436.375" y="682" font-size="16" text-anchor="middle" font-weight="normal" fill="#000"  filter="url(#crisp)">5000</text>
<text x="478.95833333333337" y="682" font-size="16" text-anchor="middle" font-weight="normal" fill="#000"  filter="url(#crisp)">5500</text>
<text x="521.5416666666667" y="682" font-size="16" text-anchor="middle" font-weight="normal" fill="#000"  filter="url(#crisp)">6000</text>
<text x="564.125" y="682" font-size="16" text-anchor="middle" font-weight="normal" fill="#000"  filter="url(#crisp)">6500</text>
<text x="606.7083333333334" y="682" font-size="16" text-anchor="middle" font-weight="normal" fill="#000"  filter="url(#crisp)">7000</text>
<text x="408.5" y="366" font-size="21" text-anchor="middle" font-weight="bold" fill="#000"  filter="url(#crisp)">SW54 DYNO</text>
<text transform="translate(64,529) rotate(-90)" font-size="16.5" font-weight="bold" text-anchor="middle">BHP/TORQUE (FT/LB)</text>
<text x="372.5" y="709" font-size="16" text-anchor="middle" font-weight="bold" fill="#000"  filter="url(#crisp)">RPM</text>
<polyline points="138.8,624.0 181.4,599.2 224.0,584.9 266.5,559.4 309.1,541.8 351.7,528.5 394.3,508.1 436.9,492.7 479.5,460.7 522.0,448.2 564.6,435.7 607.2,435.0" fill="none" stroke="#3366cc" stroke-width="1" shape-rendering="crispEdges"/>
<rect x="135.8" y="621.0" width="6" height="6" fill="#0000ff" shape-rendering="crispEdges"/>
<rect x="178.4" y="596.2" width="6" height="6" fill="#0000ff" shape-rendering="crispEdges"/>
<rect x="221.0" y="581.9" width="6" height="6" fill="#0000ff" shape-rendering="crispEdges"/>
<rect x="263.5" y="556.4" width="6" height="6" fill="#0000ff" shape-rendering="crispEdges"/>
<rect x="306.1" y="538.8" width="6" height="6" fill="#0000ff" shape-rendering="crispEdges"/>
<rect x="348.7" y="525.5" width="6" height="6" fill="#0000ff" shape-rendering="crispEdges"/>
<rect x="391.3" y="505.1" width="6" height="6" fill="#0000ff" shape-rendering="crispEdges"/>
<rect x="433.9" y="489.7" width="6" height="6" fill="#0000ff" shape-rendering="crispEdges"/>
<rect x="476.5" y="457.7" width="6" height="6" fill="#0000ff" shape-rendering="crispEdges"/>
<rect x="519.0" y="445.2" width="6" height="6" fill="#0000ff" shape-rendering="crispEdges"/>
<rect x="561.6" y="432.7" width="6" height="6" fill="#0000ff" shape-rendering="crispEdges"/>
<rect x="604.2" y="432.0" width="6" height="6" fill="#0000ff" shape-rendering="crispEdges"/>
<polyline points="138.8,550.1 181.4,511.0 224.0,509.4 266.5,488.7 309.1,485.8 351.7,489.5 394.3,483.8 436.9,484.6 479.5,469.4 522.0,473.8 564.6,477.5 607.2,489.5" fill="none" stroke="#ffff00" stroke-width="1" shape-rendering="crispEdges"/>
<path d="M138.8 546.1L142.8 553.1H134.8z" fill="#ffff00"/>
<path d="M181.4 507.0L185.4 514.0H177.4z" fill="#ffff00"/>
<path d="M224.0 505.4L228.0 512.4H220.0z" fill="#ffff00"/>
<path d="M266.5 484.7L270.5 491.7H262.5z" fill="#ffff00"/>
<path d="M309.1 481.8L313.1 488.8H305.1z" fill="#ffff00"/>
<path d="M351.7 485.5L355.7 492.5H347.7z" fill="#ffff00"/>
<path d="M394.3 479.8L398.3 486.8H390.3z" fill="#ffff00"/>
<path d="M436.9 480.6L440.9 487.6H432.9z" fill="#ffff00"/>
<path d="M479.5 465.4L483.5 472.4H475.5z" fill="#ffff00"/>
<path d="M522.0 469.8L526.0 476.8H518.0z" fill="#ffff00"/>
<path d="M564.6 473.5L568.6 480.5H560.6z" fill="#ffff00"/>
<path d="M607.2 485.5L611.2 492.5H603.2z" fill="#ffff00"/>
<polyline points="138.8,622.1 181.4,599.8 224.0,583.3 266.5,564.3 309.1,549.7 351.7,530.9 394.3,501.7 436.9,486.5 479.5,465.2 522.0,452.1 564.6,444.0 607.2,444.3" fill="none" stroke="#ff0000" stroke-width="1" shape-rendering="crispEdges"/>
<path d="M138.8 618.5L142.4 622.1L138.8 625.7L135.2 622.1z" fill="#ff0000"/>
<path d="M181.4 596.2L185.0 599.8L181.4 603.4L177.8 599.8z" fill="#ff0000"/>
<path d="M224.0 579.7L227.6 583.3L224.0 586.9L220.4 583.3z" fill="#ff0000"/>
<path d="M266.5 560.7L270.1 564.3L266.5 567.9L262.9 564.3z" fill="#ff0000"/>
<path d="M309.1 546.1L312.7 549.7L309.1 553.3L305.5 549.7z" fill="#ff0000"/>
<path d="M351.7 527.3L355.3 530.9L351.7 534.5L348.1 530.9z" fill="#ff0000"/>
<path d="M394.3 498.1L397.9 501.7L394.3 505.3L390.7 501.7z" fill="#ff0000"/>
<path d="M436.9 482.9L440.5 486.5L436.9 490.1L433.3 486.5z" fill="#ff0000"/>
<path d="M479.5 461.6L483.1 465.2L479.5 468.8L475.9 465.2z" fill="#ff0000"/>
<path d="M522.0 448.5L525.6 452.1L522.0 455.7L518.4 452.1z" fill="#ff0000"/>
<path d="M564.6 440.4L568.2 444.0L564.6 447.6L561.0 444.0z" fill="#ff0000"/>
<path d="M607.2 440.7L610.8 444.3L607.2 447.9L603.6 444.3z" fill="#ff0000"/>
<polyline points="138.8,543.7 181.4,512.6 224.0,506.0 266.5,498.4 309.1,497.8 351.7,492.5 394.3,476.4 436.9,478.1 479.5,473.7 522.0,477.2 564.6,484.2 607.2,496.6" fill="none" stroke="#00ffff" stroke-width="1" shape-rendering="crispEdges"/>
<path d="M136.3 541.2L141.3 546.2M141.3 541.2L136.3 546.2" stroke="#00ffff" stroke-width="1" fill="none" shape-rendering="crispEdges"/>
<path d="M178.9 510.1L183.9 515.1M183.9 510.1L178.9 515.1" stroke="#00ffff" stroke-width="1" fill="none" shape-rendering="crispEdges"/>
<path d="M221.5 503.5L226.5 508.5M226.5 503.5L221.5 508.5" stroke="#00ffff" stroke-width="1" fill="none" shape-rendering="crispEdges"/>
<path d="M264.0 495.9L269.0 500.9M269.0 495.9L264.0 500.9" stroke="#00ffff" stroke-width="1" fill="none" shape-rendering="crispEdges"/>
<path d="M306.6 495.3L311.6 500.3M311.6 495.3L306.6 500.3" stroke="#00ffff" stroke-width="1" fill="none" shape-rendering="crispEdges"/>
<path d="M349.2 490.0L354.2 495.0M354.2 490.0L349.2 495.0" stroke="#00ffff" stroke-width="1" fill="none" shape-rendering="crispEdges"/>
<path d="M391.8 473.9L396.8 478.9M396.8 473.9L391.8 478.9" stroke="#00ffff" stroke-width="1" fill="none" shape-rendering="crispEdges"/>
<path d="M434.4 475.6L439.4 480.6M439.4 475.6L434.4 480.6" stroke="#00ffff" stroke-width="1" fill="none" shape-rendering="crispEdges"/>
<path d="M477.0 471.2L482.0 476.2M482.0 471.2L477.0 476.2" stroke="#00ffff" stroke-width="1" fill="none" shape-rendering="crispEdges"/>
<path d="M519.5 474.7L524.5 479.7M524.5 474.7L519.5 479.7" stroke="#00ffff" stroke-width="1" fill="none" shape-rendering="crispEdges"/>
<path d="M562.1 481.7L567.1 486.7M567.1 481.7L562.1 486.7" stroke="#00ffff" stroke-width="1" fill="none" shape-rendering="crispEdges"/>
<path d="M604.7 494.1L609.7 499.1M609.7 494.1L604.7 499.1" stroke="#00ffff" stroke-width="1" fill="none" shape-rendering="crispEdges"/>
<rect x="639.5" y="482.5" width="139" height="96" fill="#fff" stroke="#000" shape-rendering="crispEdges"/>
<rect x="645" y="496" width="27" height="1" fill="#3366cc" shape-rendering="crispEdges"/>
<rect x="655.5" y="493.5" width="6" height="6" fill="#0000ff" shape-rendering="crispEdges"/>
<text x="681" y="501" font-size="16" text-anchor="start" font-weight="normal" fill="#000"  textLength="62.5" lengthAdjust="spacing" filter="url(#crisp)">182 BHP</text>
<rect x="645" y="520" width="27" height="1" fill="#ffff00" shape-rendering="crispEdges"/>
<path d="M658.5 516.5L662.5 523.5H654.5z" fill="#ffff00"/>
<text x="677" y="525" font-size="16" text-anchor="start" font-weight="normal" fill="#000"  textLength="95" lengthAdjust="spacing" filter="url(#crisp)">182 TORQUE</text>
<rect x="645" y="544" width="27" height="1" fill="#ff0000" shape-rendering="crispEdges"/>
<path d="M658.5 540.9L662.1 544.5L658.5 548.1L654.9 544.5z" fill="#ff0000"/>
<text x="677" y="549" font-size="16" text-anchor="start" font-weight="normal" fill="#000"  textLength="62.5" lengthAdjust="spacing" filter="url(#crisp)">172 BHP</text>
<rect x="645" y="568" width="27" height="1" fill="#00ffff" shape-rendering="crispEdges"/>
<path d="M656.0 566.0L661.0 571.0M661.0 566.0L656.0 571.0" stroke="#00ffff" stroke-width="1" fill="none" shape-rendering="crispEdges"/>
<text x="677" y="573" font-size="16" text-anchor="start" font-weight="normal" fill="#000"  textLength="95" lengthAdjust="spacing" filter="url(#crisp)">172 TORQUE</text>
</g>
<g shape-rendering="crispEdges">
<rect x="1007" y="87" width="17" height="617" fill="#c0dcc0" />
<rect x="1008" y="88" width="14" height="1" fill="#ffffff" />
<rect x="1008" y="88" width="1" height="4" fill="#ffffff" />
<rect x="1021" y="88" width="1" height="5" fill="#808080" />
<rect x="1007" y="92" width="15" height="1" fill="#000" />
<rect x="1007" y="93" width="16" height="16" fill="#c0dcc0" />
<rect x="1008" y="94" width="13" height="1" fill="#ffffff" />
<rect x="1008" y="94" width="1" height="14" fill="#ffffff" />
<rect x="1021" y="93" width="1" height="16" fill="#808080" />
<rect x="1008" y="107" width="14" height="1" fill="#808080" />
<rect x="1007" y="108" width="15" height="1" fill="#404040" />
<path d="M1011 103h7l-3.5-4z" fill="#000"/>
<rect x="1007" y="109" width="16" height="533" fill="#c0dcc0" />
<rect x="1008" y="110" width="13" height="1" fill="#ffffff" />
<rect x="1008" y="110" width="1" height="531" fill="#ffffff" />
<rect x="1021" y="109" width="1" height="533" fill="#808080" />
<rect x="1008" y="640" width="14" height="1" fill="#808080" />
<rect x="1007" y="641" width="15" height="1" fill="#404040" />
<rect x="1007" y="642" width="15" height="48" fill="url(#dith)" />
<rect x="1007" y="689" width="16" height="15" fill="#c0dcc0" />
<rect x="1008" y="690" width="13" height="1" fill="#ffffff" />
<rect x="1008" y="690" width="1" height="13" fill="#ffffff" />
<rect x="1021" y="689" width="1" height="15" fill="#808080" />
<rect x="1008" y="702" width="14" height="1" fill="#808080" />
<rect x="1007" y="703" width="15" height="1" fill="#404040" />
<path d="M1011 695h7l-3.5 4z" fill="#000"/>
<rect x="0" y="704" width="1024" height="16" fill="#c0dcc0" />
<rect x="0" y="704" width="1" height="16" fill="#808080" />
<rect x="2" y="704" width="603" height="1" fill="#808080" />
<rect x="2" y="705" width="15" height="14" fill="#c0dcc0" />
<rect x="2" y="705" width="15" height="1" fill="#ffffff" />
<rect x="2" y="705" width="1" height="14" fill="#ffffff" />
<rect x="2" y="718" width="15" height="1" fill="#808080" />
<rect x="16" y="705" width="1" height="14" fill="#808080" />
<rect x="17" y="705" width="15" height="14" fill="#c0dcc0" />
<rect x="17" y="705" width="15" height="1" fill="#ffffff" />
<rect x="17" y="705" width="1" height="14" fill="#ffffff" />
<rect x="17" y="718" width="15" height="1" fill="#808080" />
<rect x="31" y="705" width="1" height="14" fill="#808080" />
<rect x="32" y="705" width="15" height="14" fill="#c0dcc0" />
<rect x="32" y="705" width="15" height="1" fill="#ffffff" />
<rect x="32" y="705" width="1" height="14" fill="#ffffff" />
<rect x="32" y="718" width="15" height="1" fill="#808080" />
<rect x="46" y="705" width="1" height="14" fill="#808080" />
<rect x="47" y="705" width="15" height="14" fill="#c0dcc0" />
<rect x="47" y="705" width="15" height="1" fill="#ffffff" />
<rect x="47" y="705" width="1" height="14" fill="#ffffff" />
<rect x="47" y="718" width="15" height="1" fill="#808080" />
<rect x="61" y="705" width="1" height="14" fill="#808080" />
<path d="M5 712l6-4.5v9z" fill="#000"/>
<rect x="4" y="708" width="1" height="9" fill="#000" />
<path d="M27 707.5v9l-6-4.5z" fill="#000"/>
<path d="M36 707.5v9l6-4.5z" fill="#000"/>
<path d="M51 707.5v9l6-4.5z" fill="#000"/>
<rect x="57" y="708" width="1" height="9" fill="#000" />
</g>
<path d="M224 704L215.5 718.5H170.5L164 704z" fill="#c0dcc0"/>
<path d="M173 704L164 718.5H119.5L113 704z" fill="#c0dcc0"/>
<path d="M121 704L113.5 718.5H69.5L62 704z" fill="#fff"/>
<g shape-rendering="crispEdges">
<rect x="170" y="718" width="46" height="1" fill="#808080" />
<rect x="119" y="718" width="46" height="1" fill="#808080" />
<rect x="69" y="718" width="45" height="1" fill="#808080" />
</g>
<path d="M222.5 704L215.5 718.5M170.5 718.5L167.5 711.5M171.5 704L164.5 718.5M119.5 718.5L116.5 711.5M120.5 704L113.5 718.5M62.5 704L69.5 718.5" fill="none" stroke="#000" stroke-width="1" shape-rendering="crispEdges"/>
<text x="90" y="716" font-size="11" text-anchor="middle" font-weight="bold" fill="#000"  filter="url(#crisp2)">Sheet1</text>
<text x="141.5" y="716" font-size="11" text-anchor="middle" font-weight="normal" fill="#000"  filter="url(#crisp2)">Sheet2</text>
<text x="192.5" y="716" font-size="11" text-anchor="middle" font-weight="normal" fill="#000"  filter="url(#crisp2)">Sheet3</text>
<g shape-rendering="crispEdges">
<rect x="606" y="705" width="1" height="14" fill="#ffffff" />
<rect x="608" y="705" width="1" height="14" fill="#808080" />
<rect x="609" y="704" width="1" height="15" fill="#000" />
<rect x="611" y="705" width="16" height="14" fill="#c0dcc0" />
<rect x="611" y="705" width="15" height="1" fill="#ffffff" />
<rect x="611" y="705" width="1" height="14" fill="#ffffff" />
<rect x="611" y="718" width="16" height="1" fill="#808080" />
<rect x="625" y="706" width="1" height="13" fill="#808080" />
<rect x="626" y="705" width="1" height="14" fill="#404040" />
<path d="M620.5 707.5v7l-4-3.5z" fill="#000"/>
<rect x="628" y="705" width="331" height="14" fill="#c0dcc0" />
<rect x="628" y="705" width="330" height="1" fill="#ffffff" />
<rect x="628" y="705" width="1" height="14" fill="#ffffff" />
<rect x="628" y="718" width="331" height="1" fill="#808080" />
<rect x="957" y="706" width="1" height="13" fill="#808080" />
<rect x="958" y="705" width="1" height="14" fill="#404040" />
<rect x="959" y="705" width="28" height="14" fill="url(#dith)" />
<rect x="987" y="705" width="15" height="14" fill="#c0dcc0" />
<rect x="987" y="705" width="14" height="1" fill="#ffffff" />
<rect x="987" y="705" width="1" height="14" fill="#ffffff" />
<rect x="987" y="718" width="15" height="1" fill="#808080" />
<rect x="1000" y="706" width="1" height="13" fill="#808080" />
<rect x="1001" y="705" width="1" height="14" fill="#404040" />
<path d="M992 707.5v7l4-3.5z" fill="#000"/>
<rect x="1003" y="705" width="1" height="14" fill="#ffffff" />
<rect x="1005" y="705" width="1" height="14" fill="#808080" />
<rect x="1006" y="704" width="1" height="15" fill="#000" />
<rect x="1007" y="704" width="16" height="1" fill="#000" />
<rect x="1007" y="704" width="1" height="15" fill="#000" />
<rect x="1008" y="705" width="15" height="15" fill="#c0dcc0" />
</g>
<g shape-rendering="crispEdges">
<rect x="0" y="720" width="1024" height="1" fill="#ffffff" />
<text x="7" y="736" font-size="11.5" text-anchor="start" font-weight="normal" fill="#000"  textLength="35" lengthAdjust="spacing" filter="url(#crisp2)">Ready</text>
<rect x="654" y="723" width="1" height="16" fill="#808080" />
<rect x="655" y="723" width="1" height="16" fill="#ffffff" />
<rect x="662" y="724" width="34" height="1" fill="#808080" />
<rect x="662" y="724" width="1" height="15" fill="#808080" />
<rect x="662" y="738" width="34" height="1" fill="#ffffff" />
<rect x="695" y="724" width="1" height="15" fill="#ffffff" />
<rect x="698" y="724" width="130" height="1" fill="#808080" />
<rect x="698" y="724" width="1" height="15" fill="#808080" />
<rect x="698" y="738" width="130" height="1" fill="#ffffff" />
<rect x="827" y="724" width="1" height="15" fill="#ffffff" />
<rect x="830" y="724" width="28" height="1" fill="#808080" />
<rect x="830" y="724" width="1" height="15" fill="#808080" />
<rect x="830" y="738" width="28" height="1" fill="#ffffff" />
<rect x="857" y="724" width="1" height="15" fill="#ffffff" />
<rect x="860" y="724" width="35" height="1" fill="#808080" />
<rect x="860" y="724" width="1" height="15" fill="#808080" />
<rect x="860" y="738" width="35" height="1" fill="#ffffff" />
<rect x="894" y="724" width="1" height="15" fill="#ffffff" />
<rect x="897" y="724" width="30" height="1" fill="#808080" />
<rect x="897" y="724" width="1" height="15" fill="#808080" />
<rect x="897" y="738" width="30" height="1" fill="#ffffff" />
<rect x="926" y="724" width="1" height="15" fill="#ffffff" />
<rect x="929" y="724" width="33" height="1" fill="#808080" />
<rect x="929" y="724" width="1" height="15" fill="#808080" />
<rect x="929" y="738" width="33" height="1" fill="#ffffff" />
<rect x="961" y="724" width="1" height="15" fill="#ffffff" />
<rect x="964" y="724" width="30" height="1" fill="#808080" />
<rect x="964" y="724" width="1" height="15" fill="#808080" />
<rect x="964" y="738" width="30" height="1" fill="#ffffff" />
<rect x="993" y="724" width="1" height="15" fill="#ffffff" />
<rect x="996" y="724" width="23" height="1" fill="#808080" />
<rect x="996" y="724" width="1" height="15" fill="#808080" />
<rect x="996" y="738" width="23" height="1" fill="#ffffff" />
<rect x="1018" y="724" width="1" height="15" fill="#ffffff" />
<rect x="0" y="741" width="1024" height="1" fill="#ffffff" />
</g>
<g shape-rendering="crispEdges">
<rect x="0" y="741" width="1024" height="27" fill="#c0dcc0" />
<rect x="0" y="741" width="1024" height="1" fill="#ffffff" />
<rect x="2" y="744" width="55" height="1" fill="#ffffff" />
<rect x="2" y="744" width="1" height="22" fill="#ffffff" />
<rect x="2" y="765" width="55" height="1" fill="#000" />
<rect x="56" y="744" width="1" height="22" fill="#000" />
<rect x="3" y="764" width="53" height="1" fill="#808080" />
<rect x="55" y="745" width="1" height="20" fill="#808080" />
<text x="24" y="759" font-size="11" text-anchor="start" font-weight="bold" fill="#000"  textLength="29" lengthAdjust="spacing" filter="url(#crisp2)">Start</text>
</g>
<path d="M12 750q2-2 4.5-1t5-1v11q-2.5 1-5 0t-4.5 1z" fill="#000"/>
<path d="M13.2 751q1-1 2.3-.6v3.2q-1.3-.4-2.3.4z" fill="#ff0000"/><path d="M17 750.6q1.5.4 3.3-.4v3.3q-1.8.6-3.3.1z" fill="#00c000"/>
<path d="M13.2 755.5q1-.8 2.3-.4v3.3q-1.3-.4-2.3.3z" fill="#0000ff"/><path d="M17 755.1q1.5.4 3.3-.3v3.3q-1.8.6-3.3.1z" fill="#ffff00"/>
<g shape-rendering="crispEdges">
<rect x="6" y="751" width="1" height="1" fill="#000" />
<rect x="8" y="751" width="3" height="1" fill="#000" />
<rect x="6" y="753" width="1" height="2" fill="#ff0000" />
<rect x="8" y="753" width="4" height="2" fill="#ff0000" />
<rect x="6" y="756" width="1" height="2" fill="#0000ff" />
<rect x="8" y="756" width="4" height="2" fill="#0000ff" />
<rect x="6" y="759" width="1" height="1" fill="#000" />
<rect x="8" y="759" width="3" height="1" fill="#000" />
<rect x="60" y="744" width="1" height="22" fill="#808080" />
<rect x="61" y="744" width="1" height="22" fill="#ffffff" />
<rect x="64" y="746" width="1" height="18" fill="#ffffff" />
<rect x="65" y="746" width="1" height="18" fill="#c0dcc0" />
<rect x="66" y="746" width="1" height="18" fill="#808080" />
<rect x="74" y="748" width="15" height="15" fill="#2080a0" />
<rect x="75" y="762" width="15" height="1" fill="#000" />
<rect x="89" y="749" width="1" height="14" fill="#000" />
<path d="M76 751h9l3 3v7h-12z" fill="#f0f0e0"/>
<rect x="85" y="754" width="3" height="7" fill="#d0c890" />
<rect x="78" y="754" width="6" height="6" fill="#000" />
<rect x="79" y="755" width="4" height="4" fill="#fff" />
<path d="M81 757l6-7" stroke="#e0a000" stroke-width="2"/>
<rect x="87" y="749" width="2" height="2" fill="#ff3000" />
</g>
<path d="M99 756.5a5.5 5.5 0 1 1 11 0h-7.5q.5 3 3.5 3q2 0 3-1.5h3.5q-1.5 4-6.5 4q-6 0-7-5.5z M102.5 754.5h4q-.5-2.5-2-2.5t-2 2.5z" fill="#2a7ad8" fill-rule="evenodd"/>
<path d="M98 763q-3 0 3-8t10-7q1 2-2 5" fill="none" stroke="#40a8e0" stroke-width="1.3"/>
<path d="M121 752h4l1-1h7l1 2v8h-13z" fill="#808000"/>
<path d="M125 751l5-4 5 6-4 3z" fill="#fff" stroke="#203090" stroke-width=".8"/>
<path d="M120.5 754.5h15l-1 7h-13z" fill="#e8d890" stroke="#808000"/>
<path d="M143 755l7.5-7.5 7.5 7.5h-2v7h-11v-7z" fill="#ffc080"/>
<path d="M143 755l7.5-7.5 7.5 7.5" fill="none" stroke="#ff3030" stroke-width="2"/>
<g shape-rendering="crispEdges">
<rect x="148" y="756" width="2" height="6" fill="#fff" />
<rect x="151" y="756" width="2" height="4" fill="#fff" />
<rect x="145" y="762" width="13" height="1" fill="#808080" />
</g>
<path d="M182 749.5l3 2-3 2M186 749.5l3 2-3 2" fill="none" stroke="#000" stroke-width="1.4"/>
<g shape-rendering="crispEdges">
<rect x="191" y="744" width="1" height="22" fill="#808080" />
<rect x="192" y="744" width="1" height="22" fill="#ffffff" />
<rect x="195" y="746" width="1" height="18" fill="#ffffff" />
<rect x="196" y="746" width="1" height="18" fill="#c0dcc0" />
<rect x="197" y="746" width="1" height="18" fill="#808080" />
<rect x="202" y="744" width="69" height="1" fill="#ffffff" />
<rect x="202" y="744" width="1" height="22" fill="#ffffff" />
<rect x="202" y="765" width="69" height="1" fill="#000" />
<rect x="270" y="744" width="1" height="22" fill="#000" />
<rect x="203" y="764" width="67" height="1" fill="#808080" />
<rect x="269" y="745" width="1" height="20" fill="#808080" />
<rect x="274" y="744" width="69" height="1" fill="#ffffff" />
<rect x="274" y="744" width="1" height="22" fill="#ffffff" />
<rect x="274" y="765" width="69" height="1" fill="#000" />
<rect x="342" y="744" width="1" height="22" fill="#000" />
<rect x="275" y="764" width="67" height="1" fill="#808080" />
<rect x="341" y="745" width="1" height="20" fill="#808080" />
<rect x="346" y="744" width="69" height="1" fill="#ffffff" />
<rect x="346" y="744" width="1" height="22" fill="#ffffff" />
<rect x="346" y="765" width="69" height="1" fill="#000" />
<rect x="414" y="744" width="1" height="22" fill="#000" />
<rect x="347" y="764" width="67" height="1" fill="#808080" />
<rect x="413" y="745" width="1" height="20" fill="#808080" />
<rect x="418" y="744" width="69" height="1" fill="#ffffff" />
<rect x="418" y="744" width="1" height="22" fill="#ffffff" />
<rect x="418" y="765" width="69" height="1" fill="#000" />
<rect x="486" y="744" width="1" height="22" fill="#000" />
<rect x="419" y="764" width="67" height="1" fill="#808080" />
<rect x="485" y="745" width="1" height="20" fill="#808080" />
<rect x="490" y="744" width="69" height="1" fill="#ffffff" />
<rect x="490" y="744" width="1" height="22" fill="#ffffff" />
<rect x="490" y="765" width="69" height="1" fill="#000" />
<rect x="558" y="744" width="1" height="22" fill="#000" />
<rect x="491" y="764" width="67" height="1" fill="#808080" />
<rect x="557" y="745" width="1" height="20" fill="#808080" />
<rect x="562" y="744" width="69" height="1" fill="#ffffff" />
<rect x="562" y="744" width="1" height="22" fill="#ffffff" />
<rect x="562" y="765" width="69" height="1" fill="#000" />
<rect x="630" y="744" width="1" height="22" fill="#000" />
<rect x="563" y="764" width="67" height="1" fill="#808080" />
<rect x="629" y="745" width="1" height="20" fill="#808080" />
<rect x="634" y="744" width="69" height="1" fill="#ffffff" />
<rect x="634" y="744" width="1" height="22" fill="#ffffff" />
<rect x="634" y="765" width="69" height="1" fill="#000" />
<rect x="702" y="744" width="1" height="22" fill="#000" />
<rect x="635" y="764" width="67" height="1" fill="#808080" />
<rect x="701" y="745" width="1" height="20" fill="#808080" />
<rect x="706" y="744" width="69" height="1" fill="#ffffff" />
<rect x="706" y="744" width="1" height="22" fill="#ffffff" />
<rect x="706" y="765" width="69" height="1" fill="#000" />
<rect x="774" y="744" width="1" height="22" fill="#000" />
<rect x="707" y="764" width="67" height="1" fill="#808080" />
<rect x="773" y="745" width="1" height="20" fill="#808080" />
<rect x="780" y="746" width="66" height="19" fill="url(#dithw)" />
<rect x="778" y="744" width="69" height="1" fill="#000" />
<rect x="778" y="744" width="1" height="22" fill="#000" />
<rect x="779" y="745" width="67" height="1" fill="#808080" />
<rect x="779" y="745" width="1" height="20" fill="#808080" />
<rect x="778" y="765" width="69" height="1" fill="#ffffff" />
<rect x="846" y="744" width="1" height="22" fill="#ffffff" />
</g>
<g shape-rendering="crispEdges">
<rect x="206" y="747" width="16" height="16" fill="#808000" />
<rect x="208" y="749" width="12" height="12" fill="#fff" />
<rect x="210" y="751" width="8" height="8" fill="#808000" />
<rect x="208" y="753" width="2" height="4" fill="#808000" />
<rect x="218" y="753" width="2" height="4" fill="#808000" />
<rect x="212" y="749" width="4" height="2" fill="#808000" />
<rect x="212" y="759" width="4" height="2" fill="#808000" />
</g>
<circle cx="214" cy="755" r="4.5" fill="#fff"/><path d="M213.5 752v3.5h3" stroke="#808000" stroke-width="1.5" fill="none"/>
<text x="224" y="759" font-size="11" text-anchor="start" font-weight="normal" fill="#000"  textLength="41.5" lengthAdjust="spacing" filter="url(#crisp2)">Inbox ...</text>
<path d="M281.5 747.5h9l3 3v12h-12z" fill="#fff" stroke="#606060"/>
<path d="M293.5 750v12.5h-12" fill="none" stroke="#404020"/>
<path d="M279 755a4.5 4.5 0 1 1 9 0h-6q.4 2 2.5 2q1.3 0 2-1h2q-1 3-4.5 3q-4.5 0-5-4z M282 753.5h3q-.4-2-1.5-2t-1.5 2z" fill="#2040d0" fill-rule="evenodd"/>
<path d="M279 759q-2-3 4-8t6-4" fill="none" stroke="#2020a0" stroke-width="1.2"/>
<text x="296" y="759" font-size="11" text-anchor="start" font-weight="normal" fill="#000"  textLength="44.0" lengthAdjust="spacing" filter="url(#crisp2)">Shell O...</text>
<path d="M353.5 747.5h9l3 3v12h-12z" fill="#fff" stroke="#606060"/>
<path d="M365.5 750v12.5h-12" fill="none" stroke="#404020"/>
<path d="M351 755a4.5 4.5 0 1 1 9 0h-6q.4 2 2.5 2q1.3 0 2-1h2q-1 3-4.5 3q-4.5 0-5-4z M354 753.5h3q-.4-2-1.5-2t-1.5 2z" fill="#2040d0" fill-rule="evenodd"/>
<path d="M351 759q-2-3 4-8t6-4" fill="none" stroke="#2020a0" stroke-width="1.2"/>
<text x="367" y="759" font-size="11" text-anchor="start" font-weight="normal" fill="#000"  textLength="41.0" lengthAdjust="spacing" filter="url(#crisp2)">ClioSp...</text>
<ellipse cx="432.5" cy="750.5" rx="5" ry="3" fill="#fff"/>
<rect x="429" y="749" width="5" height="1" fill="#404040" />
<rect x="429" y="751" width="5" height="1" fill="#404040" />
<circle cx="426" cy="754" r="3" fill="#40a080"/><path d="M426 757l8-4" stroke="#0030a0" stroke-width="2"/>
<path d="M423 763l3-5 4 0 5 5z" fill="#208060"/><path d="M428 758l7 5h-5z" fill="#0030a0"/>
<text x="439.5" y="759" font-size="11" text-anchor="start" font-weight="normal" fill="#000"  textLength="42.0" lengthAdjust="spacing" filter="url(#crisp2)">Charle...</text>
<path d="M497.5 747.5h9l3 3v12h-12z" fill="#fff" stroke="#606060"/>
<path d="M509.5 750v12.5h-12" fill="none" stroke="#404020"/>
<path d="M495 755a4.5 4.5 0 1 1 9 0h-6q.4 2 2.5 2q1.3 0 2-1h2q-1 3-4.5 3q-4.5 0-5-4z M498 753.5h3q-.4-2-1.5-2t-1.5 2z" fill="#2040d0" fill-rule="evenodd"/>
<path d="M495 759q-2-3 4-8t6-4" fill="none" stroke="#2020a0" stroke-width="1.2"/>
<text x="512.5" y="759" font-size="11" text-anchor="start" font-weight="normal" fill="#000"  textLength="44.0" lengthAdjust="spacing" filter="url(#crisp2)">ajrmot...</text>
<path d="M572.5 747.5h8l1.5 1.5v13.5h-10z" fill="#fff" stroke="#000"/>
<path d="M567.5 755.5h8v7h-8z" fill="#f0f0f0" stroke="#000"/>
<path d="M568 749l4 6" stroke="#0000ff" stroke-width="2"/><path d="M572 748v7" stroke="#ff0000" stroke-width="2"/><path d="M577 749l-4 6" stroke="#ffff00" stroke-width="2"/>
<text x="583.75" y="759" font-size="11" text-anchor="start" font-weight="normal" fill="#000"  textLength="41.8" lengthAdjust="spacing" filter="url(#crisp2)">untitle...</text>
<path d="M639 749h5l1 2h7v9h-13z" fill="#e0e080" stroke="#a0a000"/>
<path d="M638 753h13l1 7h-12z" fill="#d8d880" stroke="#a0a000"/>
<path d="M640 761h13v-9" fill="none" stroke="#000"/>
<text x="655.5" y="759" font-size="11" text-anchor="start" font-weight="normal" fill="#000"  textLength="37.5" lengthAdjust="spacing" filter="url(#crisp2)">My Pic...</text>
<path d="M716.5 747.5h6l3 3v12h-9z" fill="#fff" stroke="#000"/>
<g shape-rendering="crispEdges">
<rect x="710" y="750" width="11" height="10" fill="#fff" />
<rect x="710" y="750" width="11" height="1" fill="#008000" />
<rect x="710" y="751" width="1" height="1" fill="#008000" />
<rect x="720" y="751" width="1" height="1" fill="#008000" />
<rect x="710" y="752" width="1" height="1" fill="#008000" />
<rect x="712" y="752" width="3" height="1" fill="#008000" />
<rect x="716" y="752" width="3" height="1" fill="#008000" />
<rect x="720" y="752" width="1" height="1" fill="#008000" />
<rect x="710" y="753" width="1" height="1" fill="#008000" />
<rect x="713" y="753" width="1" height="1" fill="#008000" />
<rect x="715" y="753" width="3" height="1" fill="#008000" />
<rect x="720" y="753" width="1" height="1" fill="#008000" />
<rect x="710" y="754" width="1" height="1" fill="#008000" />
<rect x="714" y="754" width="1" height="1" fill="#008000" />
<rect x="716" y="754" width="1" height="1" fill="#008000" />
<rect x="720" y="754" width="1" height="1" fill="#008000" />
<rect x="710" y="755" width="1" height="1" fill="#008000" />
<rect x="713" y="755" width="3" height="1" fill="#008000" />
<rect x="717" y="755" width="1" height="1" fill="#008000" />
<rect x="720" y="755" width="1" height="1" fill="#008000" />
<rect x="710" y="756" width="1" height="1" fill="#008000" />
<rect x="712" y="756" width="7" height="1" fill="#008000" />
<rect x="720" y="756" width="1" height="1" fill="#008000" />
<rect x="710" y="757" width="1" height="1" fill="#008000" />
<rect x="712" y="757" width="7" height="1" fill="#008000" />
<rect x="720" y="757" width="1" height="1" fill="#008000" />
<rect x="710" y="758" width="1" height="1" fill="#008000" />
<rect x="720" y="758" width="1" height="1" fill="#008000" />
<rect x="710" y="759" width="11" height="1" fill="#008000" />
<rect x="722" y="754" width="2" height="1" fill="#c0c0c0" />
<rect x="722" y="756" width="2" height="1" fill="#c0c0c0" />
</g>
<text x="727.5" y="759" font-size="11" text-anchor="start" font-weight="normal" fill="#000"  textLength="39.6" lengthAdjust="spacing" filter="url(#crisp2)">sw54 ...</text>
<path d="M789.5 747.5h6l3 3v12h-9z" fill="#fff" stroke="#000"/>
<g shape-rendering="crispEdges">
<rect x="783" y="750" width="11" height="10" fill="#fff" />
<rect x="783" y="750" width="11" height="1" fill="#008000" />
<rect x="783" y="751" width="1" height="1" fill="#008000" />
<rect x="793" y="751" width="1" height="1" fill="#008000" />
<rect x="783" y="752" width="1" height="1" fill="#008000" />
<rect x="785" y="752" width="3" height="1" fill="#008000" />
<rect x="789" y="752" width="3" height="1" fill="#008000" />
<rect x="793" y="752" width="1" height="1" fill="#008000" />
<rect x="783" y="753" width="1" height="1" fill="#008000" />
<rect x="786" y="753" width="1" height="1" fill="#008000" />
<rect x="788" y="753" width="3" height="1" fill="#008000" />
<rect x="793" y="753" width="1" height="1" fill="#008000" />
<rect x="783" y="754" width="1" height="1" fill="#008000" />
<rect x="787" y="754" width="1" height="1" fill="#008000" />
<rect x="789" y="754" width="1" height="1" fill="#008000" />
<rect x="793" y="754" width="1" height="1" fill="#008000" />
<rect x="783" y="755" width="1" height="1" fill="#008000" />
<rect x="786" y="755" width="3" height="1" fill="#008000" />
<rect x="790" y="755" width="1" height="1" fill="#008000" />
<rect x="793" y="755" width="1" height="1" fill="#008000" />
<rect x="783" y="756" width="1" height="1" fill="#008000" />
<rect x="785" y="756" width="7" height="1" fill="#008000" />
<rect x="793" y="756" width="1" height="1" fill="#008000" />
<rect x="783" y="757" width="1" height="1" fill="#008000" />
<rect x="785" y="757" width="7" height="1" fill="#008000" />
<rect x="793" y="757" width="1" height="1" fill="#008000" />
<rect x="783" y="758" width="1" height="1" fill="#008000" />
<rect x="793" y="758" width="1" height="1" fill="#008000" />
<rect x="783" y="759" width="11" height="1" fill="#008000" />
<rect x="795" y="754" width="2" height="1" fill="#c0c0c0" />
<rect x="795" y="756" width="2" height="1" fill="#c0c0c0" />
</g>
<text x="800" y="760" font-size="11" text-anchor="start" font-weight="bold" fill="#000"  textLength="40.8" lengthAdjust="spacing" filter="url(#crisp2)">sw54 ...</text>
<g shape-rendering="crispEdges">
<rect x="856" y="744" width="166" height="1" fill="#808080" />
<rect x="856" y="744" width="1" height="22" fill="#808080" />
<rect x="856" y="765" width="167" height="1" fill="#ffffff" />
<rect x="1022" y="744" width="1" height="22" fill="#ffffff" />
</g>
<circle cx="869" cy="754" r="5.5" fill="#00c000"/>
<path d="M866 751a4 4 0 0 1 7 0v3h-7z" fill="#00ffff"/><path d="M865 756h9l-2 4h-5z" fill="#0000ff"/>
<path d="M872 749l3 2-1 4-2-1z" fill="#ffff00"/><path d="M861 761l10-10" stroke="#ffff00" stroke-width="1.5"/><rect x="860" y="759" width="3" height="3" fill="#000"/><path d="M864 762h6" stroke="#000" stroke-width="1.5"/>
<path d="M880 752h3l4-3v12l-4-3h-3z" fill="#ffff80" stroke="#000" stroke-width=".8"/><rect x="884" y="749" width="3" height="12" fill="#fff"/>
<circle cx="886" cy="755" r="6.5" fill="none" stroke="#ff0000" stroke-width="1.6"/><path d="M882 760l9-10" stroke="#ff0000" stroke-width="1.6"/>
<g shape-rendering="crispEdges">
<rect x="896" y="747" width="16" height="16" fill="#000" />
<rect x="897" y="748" width="14" height="13" fill="#fff" />
<rect x="905" y="749" width="5" height="11" fill="#c0c0c0" />
<rect x="898" y="761" width="13" height="1" fill="#808080" />
<rect x="910" y="748" width="1" height="14" fill="#404040" />
<rect x="903" y="749" width="2" height="3" fill="#ff0000" />
<rect x="902" y="752" width="2" height="3" fill="#ff0000" />
<rect x="903" y="755" width="2" height="3" fill="#ff0000" />
</g>
<path d="M918.5 747h7.5l4.5 4.5v7l-4.5 4.5h-7.5l-4.5-4.5v-7z" fill="#0000ff"/>
<path d="M914 755h3q1-4 2 0t2 0 2 0 2 0q1-4 2 0h3" fill="none" stroke="#ffff00" stroke-width="1.2"/>
<g shape-rendering="crispEdges">
<rect x="932" y="747" width="17" height="16" fill="#000080" />
</g>
<text x="933" y="759" font-size="11.5" text-anchor="start" font-weight="normal" fill="#fff"  filter="url(#crisp2)">EN</text>
<circle cx="958" cy="751.5" r="3.5" fill="#40a0a0"/><path d="M952 763q0-6 6-6t6 6z" fill="#40a0a0"/>
<text x="981" y="760" font-size="11.5" text-anchor="start" font-weight="normal" fill="#000" letter-spacing="0.3" filter="url(#crisp2)">09:57</text>
</svg></body></html>
